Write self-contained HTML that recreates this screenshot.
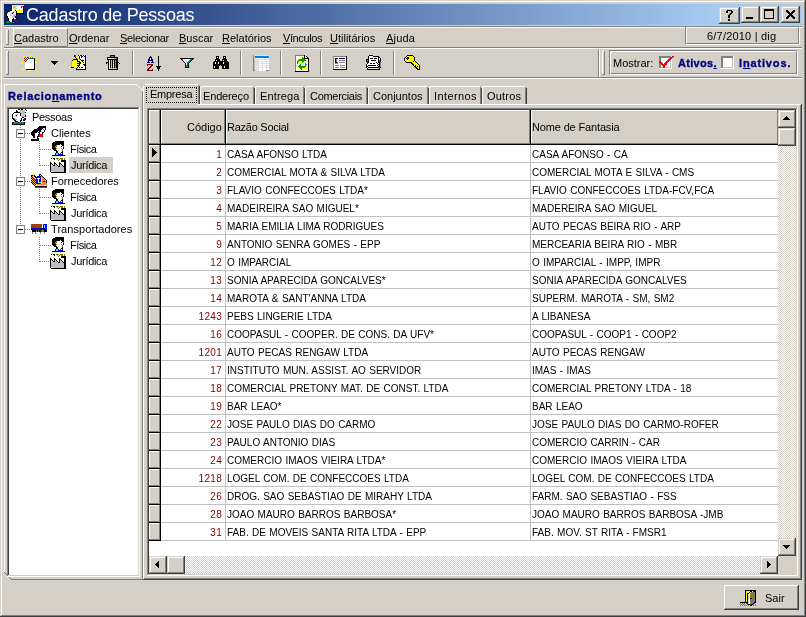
<!DOCTYPE html>
<html><head><meta charset="utf-8"><style>
*{margin:0;padding:0}
html,body{width:806px;height:617px;overflow:hidden;background:#d4d0c8;position:relative;font-family:"Liberation Sans",sans-serif;color:#000}
div{position:absolute}
.t{white-space:nowrap;font-size:11px;will-change:transform}
u{text-decoration:underline}
</style></head><body>
<div style="left:0px;top:0px;width:806px;height:1px;background:#d4d0c8"></div>
<div style="left:0px;top:0px;width:1px;height:617px;background:#d4d0c8"></div>
<div style="left:1px;top:1px;width:804px;height:1px;background:#fff"></div>
<div style="left:1px;top:1px;width:1px;height:615px;background:#fff"></div>
<div style="left:805px;top:0px;width:1px;height:617px;background:#404040"></div>
<div style="left:0px;top:616px;width:806px;height:1px;background:#404040"></div>
<div style="left:804px;top:1px;width:1px;height:615px;background:#808080"></div>
<div style="left:1px;top:615px;width:804px;height:1px;background:#808080"></div>
<div style="left:4px;top:4px;width:798px;height:21px;background:linear-gradient(to right,#0a246a 0px,#a6caf0 712px,#a6caf0 100%)"></div>
<svg style="position:absolute;left:6px;top:5px" width="18" height="18" shape-rendering="crispEdges"><rect x="6" y="0" width="12" height="1" fill="#e0e0e0"/><rect x="6" y="1" width="1" height="1" fill="#fff"/><rect x="7" y="1" width="4" height="1" fill="#c0c0c0"/><rect x="11" y="1" width="4" height="1" fill="#fff"/><rect x="15" y="1" width="2" height="1" fill="#ff0000"/><rect x="17" y="1" width="1" height="1" fill="#000"/><rect x="6" y="2" width="1" height="1" fill="#fff"/><rect x="7" y="2" width="3" height="1" fill="#c0c0c0"/><rect x="10" y="2" width="5" height="1" fill="#fff"/><rect x="15" y="2" width="1" height="1" fill="#ff0000"/><rect x="16" y="2" width="1" height="1" fill="#fff"/><rect x="17" y="2" width="1" height="1" fill="#000"/><rect x="6" y="3" width="1" height="1" fill="#fff"/><rect x="7" y="3" width="2" height="1" fill="#ffff00"/><rect x="9" y="3" width="2" height="1" fill="#c0c0c0"/><rect x="11" y="3" width="4" height="1" fill="#fff"/><rect x="15" y="3" width="1" height="1" fill="#ffff00"/><rect x="16" y="3" width="1" height="1" fill="#fff"/><rect x="17" y="3" width="1" height="1" fill="#000"/><rect x="6" y="4" width="2" height="1" fill="#fff"/><rect x="8" y="4" width="2" height="1" fill="#ffff00"/><rect x="10" y="4" width="2" height="1" fill="#fff"/><rect x="12" y="4" width="2" height="1" fill="#ffff00"/><rect x="14" y="4" width="3" height="1" fill="#fff"/><rect x="17" y="4" width="1" height="1" fill="#000"/><rect x="4" y="5" width="2" height="1" fill="#000"/><rect x="6" y="5" width="3" height="1" fill="#fff"/><rect x="9" y="5" width="1" height="1" fill="#000"/><rect x="10" y="5" width="7" height="1" fill="#ffff00"/><rect x="17" y="5" width="1" height="1" fill="#000"/><rect x="2" y="6" width="2" height="1" fill="#000"/><rect x="4" y="6" width="4" height="1" fill="#fff"/><rect x="8" y="6" width="1" height="1" fill="#c0c0c0"/><rect x="9" y="6" width="1" height="1" fill="#fff"/><rect x="10" y="6" width="1" height="1" fill="#000"/><rect x="11" y="6" width="1" height="1" fill="#ffff00"/><rect x="12" y="6" width="1" height="1" fill="#fff"/><rect x="13" y="6" width="1" height="1" fill="#ffff00"/><rect x="14" y="6" width="1" height="1" fill="#fff"/><rect x="15" y="6" width="1" height="1" fill="#ffff00"/><rect x="16" y="6" width="1" height="1" fill="#fff"/><rect x="17" y="6" width="1" height="1" fill="#000"/><rect x="1" y="7" width="1" height="1" fill="#000"/><rect x="2" y="7" width="3" height="1" fill="#fff"/><rect x="5" y="7" width="2" height="1" fill="#c0c0c0"/><rect x="7" y="7" width="1" height="1" fill="#000"/><rect x="8" y="7" width="2" height="1" fill="#fff"/><rect x="10" y="7" width="1" height="1" fill="#000"/><rect x="11" y="7" width="1" height="1" fill="#fff"/><rect x="12" y="7" width="1" height="1" fill="#ffff00"/><rect x="13" y="7" width="1" height="1" fill="#fff"/><rect x="14" y="7" width="1" height="1" fill="#ffff00"/><rect x="15" y="7" width="2" height="1" fill="#fff"/><rect x="17" y="7" width="1" height="1" fill="#000"/><rect x="0" y="8" width="1" height="1" fill="#000"/><rect x="1" y="8" width="4" height="1" fill="#fff"/><rect x="5" y="8" width="1" height="1" fill="#c0c0c0"/><rect x="6" y="8" width="1" height="1" fill="#000"/><rect x="7" y="8" width="3" height="1" fill="#fff"/><rect x="10" y="8" width="8" height="1" fill="#000"/><rect x="0" y="9" width="1" height="1" fill="#000"/><rect x="1" y="9" width="3" height="1" fill="#fff"/><rect x="4" y="9" width="1" height="1" fill="#c0c0c0"/><rect x="5" y="9" width="2" height="1" fill="#fff"/><rect x="7" y="9" width="3" height="1" fill="#c0c0c0"/><rect x="10" y="9" width="1" height="1" fill="#000"/><rect x="0" y="10" width="1" height="1" fill="#000"/><rect x="1" y="10" width="3" height="1" fill="#fff"/><rect x="4" y="10" width="2" height="1" fill="#c0c0c0"/><rect x="6" y="10" width="1" height="1" fill="#fff"/><rect x="7" y="10" width="3" height="1" fill="#c0c0c0"/><rect x="10" y="10" width="1" height="1" fill="#000"/><rect x="0" y="11" width="2" height="1" fill="#000"/><rect x="2" y="11" width="4" height="1" fill="#fff"/><rect x="6" y="11" width="3" height="1" fill="#c0c0c0"/><rect x="9" y="11" width="1" height="1" fill="#000"/><rect x="1" y="12" width="1" height="1" fill="#000"/><rect x="2" y="12" width="4" height="1" fill="#fff"/><rect x="6" y="12" width="3" height="1" fill="#c0c0c0"/><rect x="9" y="12" width="1" height="1" fill="#000"/><rect x="2" y="13" width="1" height="1" fill="#000"/><rect x="3" y="13" width="4" height="1" fill="#fff"/><rect x="7" y="13" width="1" height="1" fill="#000"/><rect x="8" y="13" width="2" height="1" fill="#fff"/><rect x="10" y="13" width="1" height="1" fill="#000"/><rect x="2" y="14" width="1" height="1" fill="#000"/><rect x="3" y="14" width="3" height="1" fill="#fff"/><rect x="6" y="14" width="2" height="1" fill="#000"/><rect x="8" y="14" width="3" height="1" fill="#800080"/><rect x="11" y="14" width="1" height="1" fill="#000"/><rect x="2" y="15" width="1" height="1" fill="#000"/><rect x="3" y="15" width="3" height="1" fill="#fff"/><rect x="6" y="15" width="1" height="1" fill="#000"/><rect x="7" y="15" width="5" height="1" fill="#800080"/><rect x="1" y="16" width="2" height="1" fill="#00a000"/><rect x="3" y="16" width="1" height="1" fill="#000"/><rect x="4" y="16" width="2" height="1" fill="#fff"/><rect x="6" y="16" width="1" height="1" fill="#000"/><rect x="0" y="17" width="4" height="1" fill="#00a000"/><rect x="5" y="17" width="3" height="1" fill="#008080"/></svg>
<div class="t" style="left:26px;top:5px;font-size:18px;line-height:21px;color:#fff;letter-spacing:-0.2px">Cadastro de Pessoas</div>
<div style="left:719px;top:7px;width:21px;height:17px;background:#404040"></div>
<div style="left:719px;top:7px;width:20px;height:16px;background:#d4d0c8"></div>
<div style="left:720px;top:8px;width:19px;height:15px;background:#808080"></div>
<div style="left:720px;top:8px;width:18px;height:14px;background:#fff"></div>
<div style="left:721px;top:9px;width:17px;height:13px;background:#d4d0c8"></div>
<svg style="position:absolute;left:726px;top:10px" width="7" height="11" shape-rendering="crispEdges"><rect x="1" y="0" width="5" height="1" fill="#000"/><rect x="0" y="1" width="2" height="1" fill="#000"/><rect x="5" y="1" width="2" height="1" fill="#000"/><rect x="0" y="2" width="2" height="1" fill="#000"/><rect x="5" y="2" width="2" height="1" fill="#000"/><rect x="4" y="3" width="2" height="1" fill="#000"/><rect x="3" y="4" width="2" height="1" fill="#000"/><rect x="2" y="5" width="2" height="1" fill="#000"/><rect x="2" y="6" width="2" height="1" fill="#000"/><rect x="2" y="7" width="2" height="1" fill="#000"/><rect x="2" y="9" width="2" height="1" fill="#000"/><rect x="2" y="10" width="2" height="1" fill="#000"/></svg>
<div style="left:741px;top:6px;width:19px;height:17px;background:#404040"></div>
<div style="left:741px;top:6px;width:18px;height:16px;background:#d4d0c8"></div>
<div style="left:742px;top:7px;width:17px;height:15px;background:#808080"></div>
<div style="left:742px;top:7px;width:16px;height:14px;background:#fff"></div>
<div style="left:743px;top:8px;width:15px;height:13px;background:#d4d0c8"></div>
<svg style="position:absolute;left:746px;top:17px" width="7" height="2" shape-rendering="crispEdges"><rect x="0" y="0" width="7" height="1" fill="#000"/><rect x="0" y="1" width="7" height="1" fill="#000"/></svg>
<div style="left:760px;top:6px;width:19px;height:17px;background:#404040"></div>
<div style="left:760px;top:6px;width:18px;height:16px;background:#d4d0c8"></div>
<div style="left:761px;top:7px;width:17px;height:15px;background:#808080"></div>
<div style="left:761px;top:7px;width:16px;height:14px;background:#fff"></div>
<div style="left:762px;top:8px;width:15px;height:13px;background:#d4d0c8"></div>
<svg style="position:absolute;left:764px;top:9px" width="10" height="10" shape-rendering="crispEdges"><rect x="0" y="0" width="10" height="1" fill="#000"/><rect x="0" y="1" width="10" height="1" fill="#000"/><rect x="0" y="2" width="1" height="1" fill="#000"/><rect x="9" y="2" width="1" height="1" fill="#000"/><rect x="0" y="3" width="1" height="1" fill="#000"/><rect x="9" y="3" width="1" height="1" fill="#000"/><rect x="0" y="4" width="1" height="1" fill="#000"/><rect x="9" y="4" width="1" height="1" fill="#000"/><rect x="0" y="5" width="1" height="1" fill="#000"/><rect x="9" y="5" width="1" height="1" fill="#000"/><rect x="0" y="6" width="1" height="1" fill="#000"/><rect x="9" y="6" width="1" height="1" fill="#000"/><rect x="0" y="7" width="1" height="1" fill="#000"/><rect x="9" y="7" width="1" height="1" fill="#000"/><rect x="0" y="8" width="1" height="1" fill="#000"/><rect x="9" y="8" width="1" height="1" fill="#000"/><rect x="0" y="9" width="10" height="1" fill="#000"/></svg>
<div style="left:781px;top:6px;width:19px;height:17px;background:#404040"></div>
<div style="left:781px;top:6px;width:18px;height:16px;background:#d4d0c8"></div>
<div style="left:782px;top:7px;width:17px;height:15px;background:#808080"></div>
<div style="left:782px;top:7px;width:16px;height:14px;background:#fff"></div>
<div style="left:783px;top:8px;width:15px;height:13px;background:#d4d0c8"></div>
<svg style="position:absolute;left:786px;top:10px" width="9" height="9" shape-rendering="crispEdges"><rect x="0" y="0" width="2" height="1" fill="#000"/><rect x="7" y="0" width="2" height="1" fill="#000"/><rect x="0" y="1" width="3" height="1" fill="#000"/><rect x="6" y="1" width="3" height="1" fill="#000"/><rect x="1" y="2" width="3" height="1" fill="#000"/><rect x="5" y="2" width="3" height="1" fill="#000"/><rect x="2" y="3" width="5" height="1" fill="#000"/><rect x="3" y="4" width="3" height="1" fill="#000"/><rect x="2" y="5" width="5" height="1" fill="#000"/><rect x="1" y="6" width="3" height="1" fill="#000"/><rect x="5" y="6" width="3" height="1" fill="#000"/><rect x="0" y="7" width="3" height="1" fill="#000"/><rect x="6" y="7" width="3" height="1" fill="#000"/><rect x="0" y="8" width="2" height="1" fill="#000"/><rect x="7" y="8" width="2" height="1" fill="#000"/></svg>
<div style="left:4px;top:26px;width:798px;height:1px;background:#808080"></div>
<div style="left:4px;top:27px;width:798px;height:1px;background:#fff"></div>
<div style="left:6px;top:30px;width:1px;height:15px;background:#fff"></div>
<div style="left:8px;top:30px;width:1px;height:15px;background:#808080"></div>
<div style="left:6px;top:30px;width:2px;height:1px;background:#fff"></div>
<div style="left:6px;top:44px;width:3px;height:1px;background:#808080"></div>
<div style="left:13px;top:28px;width:55px;height:19px;border-top:1px solid #fff;border-left:1px solid #fff;border-right:1px solid #808080;border-bottom:1px solid #808080;box-sizing:border-box"></div>
<div class="t" style="left:14px;top:31px;font-size:11px;line-height:14px;letter-spacing:0px"><u>C</u>adastro</div>
<div class="t" style="left:69px;top:31px;font-size:11px;line-height:14px;letter-spacing:0px"><u>O</u>rdenar</div>
<div class="t" style="left:120px;top:31px;font-size:11px;line-height:14px;letter-spacing:-0.3px"><u>S</u>elecionar</div>
<div class="t" style="left:179px;top:31px;font-size:11px;line-height:14px;letter-spacing:0px"><u>B</u>uscar</div>
<div class="t" style="left:222px;top:31px;font-size:11px;line-height:14px;letter-spacing:0px"><u>R</u>elatórios</div>
<div class="t" style="left:283px;top:31px;font-size:11px;line-height:14px;letter-spacing:-0.4px"><u>V</u>ínculos</div>
<div class="t" style="left:330px;top:31px;font-size:11px;line-height:14px;letter-spacing:0px"><u>U</u>tilitários</div>
<div class="t" style="left:386px;top:31px;font-size:11px;line-height:14px;letter-spacing:0.2px"><u>A</u>juda</div>
<div style="left:4px;top:47px;width:798px;height:1px;background:#808080"></div>
<div style="left:4px;top:48px;width:798px;height:1px;background:#fff"></div>
<div style="left:685px;top:26px;width:115px;height:19px;border-top:1px solid #808080;border-left:1px solid #808080;border-right:1px solid #fff;border-bottom:1px solid #fff;box-sizing:border-box"></div>
<div style="left:686px;top:27px;width:113px;height:17px;border-top:1px solid #fff;border-left:1px solid #fff;border-right:1px solid #808080;border-bottom:1px solid #808080;box-sizing:border-box"></div>
<div class="t" style="left:707px;top:29px;font-size:11px;line-height:14px;letter-spacing:0.2px">6/7/2010 | dig</div>
<div style="left:6px;top:51px;width:1px;height:24px;background:#fff"></div>
<div style="left:8px;top:51px;width:1px;height:24px;background:#808080"></div>
<div style="left:6px;top:51px;width:2px;height:1px;background:#fff"></div>
<div style="left:6px;top:74px;width:3px;height:1px;background:#808080"></div>
<div style="left:132px;top:51px;width:1px;height:24px;background:#808080"></div>
<div style="left:133px;top:51px;width:1px;height:24px;background:#fff"></div>
<div style="left:240px;top:51px;width:1px;height:24px;background:#808080"></div>
<div style="left:241px;top:51px;width:1px;height:24px;background:#fff"></div>
<div style="left:280px;top:51px;width:1px;height:24px;background:#808080"></div>
<div style="left:281px;top:51px;width:1px;height:24px;background:#fff"></div>
<div style="left:320px;top:51px;width:1px;height:24px;background:#808080"></div>
<div style="left:321px;top:51px;width:1px;height:24px;background:#fff"></div>
<div style="left:393px;top:51px;width:1px;height:24px;background:#808080"></div>
<div style="left:394px;top:51px;width:1px;height:24px;background:#fff"></div>
<div style="left:4px;top:77px;width:798px;height:1px;background:#808080"></div>
<div style="left:4px;top:78px;width:798px;height:1px;background:#fff"></div>
<div style="left:598px;top:49px;width:1px;height:28px;background:#808080"></div>
<div style="left:599px;top:48px;width:1px;height:29px;background:#fff"></div>
<div style="left:602px;top:51px;width:1px;height:24px;background:#fff"></div>
<div style="left:604px;top:51px;width:1px;height:24px;background:#808080"></div>
<div style="left:602px;top:51px;width:2px;height:1px;background:#fff"></div>
<div style="left:602px;top:74px;width:3px;height:1px;background:#808080"></div>
<div style="left:609px;top:50px;width:189px;height:25px;border-top:1px solid #808080;border-left:1px solid #808080;border-right:1px solid #fff;border-bottom:1px solid #fff;box-sizing:border-box"></div>
<div style="left:610px;top:51px;width:187px;height:23px;border-top:1px solid #fff;border-left:1px solid #fff;border-right:1px solid #808080;border-bottom:1px solid #808080;box-sizing:border-box"></div>
<div class="t" style="left:613px;top:56px;font-size:11px;line-height:14px">Mostrar:</div>
<div style="left:659px;top:56px;width:13px;height:13px;background:#fff"></div>
<div style="left:659px;top:56px;width:12px;height:12px;background:#808080"></div>
<div style="left:661px;top:58px;width:10px;height:10px;background:#c0c0c0"></div>
<div style="left:661px;top:58px;width:9px;height:9px;background:#fff"></div>
<svg style="position:absolute;left:659px;top:56px" width="15" height="12" shape-rendering="crispEdges"><rect x="13" y="0" width="2" height="1" fill="#ff0000"/><rect x="11" y="1" width="3" height="1" fill="#ff0000"/><rect x="10" y="2" width="3" height="1" fill="#ff0000"/><rect x="9" y="3" width="3" height="1" fill="#ff0000"/><rect x="8" y="4" width="3" height="1" fill="#ff0000"/><rect x="0" y="5" width="2" height="1" fill="#ff0000"/><rect x="7" y="5" width="3" height="1" fill="#ff0000"/><rect x="0" y="6" width="3" height="1" fill="#ff0000"/><rect x="6" y="6" width="3" height="1" fill="#ff0000"/><rect x="1" y="7" width="3" height="1" fill="#ff0000"/><rect x="5" y="7" width="3" height="1" fill="#ff0000"/><rect x="2" y="8" width="6" height="1" fill="#ff0000"/><rect x="3" y="9" width="4" height="1" fill="#ff0000"/><rect x="4" y="10" width="2" height="1" fill="#ff0000"/><rect x="4" y="11" width="2" height="1" fill="#ff0000"/></svg>
<div class="t" style="left:678px;top:56px;font-size:11px;line-height:14px;font-weight:bold;color:#000080;letter-spacing:0.3px;-webkit-text-stroke:0.35px #000080">Ativos<u>.</u></div>
<div style="left:721px;top:56px;width:13px;height:13px;background:#fff"></div>
<div style="left:721px;top:56px;width:12px;height:12px;background:#808080"></div>
<div style="left:723px;top:58px;width:10px;height:10px;background:#c0c0c0"></div>
<div style="left:723px;top:58px;width:9px;height:9px;background:#fff"></div>
<div class="t" style="left:739px;top:56px;font-size:11px;line-height:14px;font-weight:bold;color:#000080;letter-spacing:0.85px;-webkit-text-stroke:0.35px #000080">I<u>n</u>ativos.</div>
<svg style="position:absolute;left:21px;top:55px" width="17" height="16" shape-rendering="crispEdges"><rect x="1" y="0" width="1" height="1" fill="#ffff00"/><rect x="8" y="0" width="2" height="1" fill="#ffff00"/><rect x="15" y="0" width="1" height="1" fill="#ffff00"/><rect x="2" y="1" width="2" height="1" fill="#ffff00"/><rect x="9" y="1" width="1" height="1" fill="#ffff00"/><rect x="13" y="1" width="2" height="1" fill="#ffff00"/><rect x="4" y="2" width="1" height="1" fill="#800000"/><rect x="5" y="2" width="1" height="1" fill="#fff"/><rect x="6" y="2" width="1" height="1" fill="#800000"/><rect x="7" y="2" width="1" height="1" fill="#008080"/><rect x="8" y="2" width="1" height="1" fill="#fff"/><rect x="9" y="2" width="1" height="1" fill="#008080"/><rect x="10" y="2" width="1" height="1" fill="#fff"/><rect x="11" y="2" width="1" height="1" fill="#008080"/><rect x="12" y="2" width="1" height="1" fill="#fff"/><rect x="3" y="3" width="1" height="1" fill="#800000"/><rect x="4" y="3" width="1" height="1" fill="#fff"/><rect x="5" y="3" width="1" height="1" fill="#800000"/><rect x="6" y="3" width="1" height="1" fill="#fff"/><rect x="7" y="3" width="6" height="1" fill="#008080"/><rect x="13" y="3" width="1" height="1" fill="#000"/><rect x="4" y="4" width="1" height="1" fill="#800000"/><rect x="5" y="4" width="1" height="1" fill="#fff"/><rect x="6" y="4" width="1" height="1" fill="#800000"/><rect x="7" y="4" width="6" height="1" fill="#fff"/><rect x="13" y="4" width="1" height="1" fill="#000"/><rect x="3" y="5" width="1" height="1" fill="#800000"/><rect x="4" y="5" width="1" height="1" fill="#fff"/><rect x="5" y="5" width="1" height="1" fill="#800000"/><rect x="6" y="5" width="7" height="1" fill="#fff"/><rect x="13" y="5" width="1" height="1" fill="#000"/><rect x="4" y="6" width="1" height="1" fill="#800000"/><rect x="5" y="6" width="8" height="1" fill="#fff"/><rect x="13" y="6" width="1" height="1" fill="#000"/><rect x="0" y="7" width="2" height="1" fill="#ffff00"/><rect x="4" y="7" width="9" height="1" fill="#fff"/><rect x="13" y="7" width="1" height="1" fill="#000"/><rect x="14" y="7" width="2" height="1" fill="#ffff00"/><rect x="1" y="8" width="1" height="1" fill="#ffff00"/><rect x="4" y="8" width="9" height="1" fill="#fff"/><rect x="13" y="8" width="1" height="1" fill="#000"/><rect x="14" y="8" width="1" height="1" fill="#ffff00"/><rect x="4" y="9" width="9" height="1" fill="#fff"/><rect x="13" y="9" width="1" height="1" fill="#000"/><rect x="4" y="10" width="9" height="1" fill="#fff"/><rect x="13" y="10" width="1" height="1" fill="#000"/><rect x="4" y="11" width="9" height="1" fill="#fff"/><rect x="13" y="11" width="1" height="1" fill="#000"/><rect x="4" y="12" width="9" height="1" fill="#fff"/><rect x="13" y="12" width="1" height="1" fill="#000"/><rect x="2" y="13" width="1" height="1" fill="#ffff00"/><rect x="4" y="13" width="9" height="1" fill="#fff"/><rect x="13" y="13" width="1" height="1" fill="#000"/><rect x="14" y="13" width="1" height="1" fill="#ffff00"/><rect x="1" y="14" width="2" height="1" fill="#ffff00"/><rect x="5" y="14" width="9" height="1" fill="#000"/><rect x="14" y="14" width="2" height="1" fill="#ffff00"/><rect x="1" y="15" width="1" height="1" fill="#ffff00"/><rect x="8" y="15" width="2" height="1" fill="#ffff00"/><rect x="15" y="15" width="1" height="1" fill="#ffff00"/></svg>
<svg style="position:absolute;left:50px;top:60px" width="9" height="6" viewBox="0 0 9 6" shape-rendering="crispEdges"><path d="M1 1h7v1h-1v1h-1v1h-1v1h-1v-1h-1v-1h-1v-1h-1z" fill="#000"/></svg>
<svg style="position:absolute;left:70px;top:54px" width="17" height="16" shape-rendering="crispEdges"><rect x="4" y="1" width="1" height="1" fill="#000"/><rect x="5" y="1" width="1" height="1" fill="#ff0000"/><rect x="8" y="1" width="1" height="1" fill="#800000"/><rect x="9" y="1" width="1" height="1" fill="#fff"/><rect x="10" y="1" width="1" height="1" fill="#800000"/><rect x="11" y="1" width="1" height="1" fill="#000080"/><rect x="12" y="1" width="1" height="1" fill="#fff"/><rect x="13" y="1" width="1" height="1" fill="#000080"/><rect x="14" y="1" width="1" height="1" fill="#fff"/><rect x="15" y="1" width="1" height="1" fill="#000080"/><rect x="4" y="2" width="1" height="1" fill="#000"/><rect x="5" y="2" width="1" height="1" fill="#ff0000"/><rect x="6" y="2" width="1" height="1" fill="#ffff00"/><rect x="8" y="2" width="1" height="1" fill="#fff"/><rect x="9" y="2" width="1" height="1" fill="#800000"/><rect x="10" y="2" width="1" height="1" fill="#fff"/><rect x="11" y="2" width="1" height="1" fill="#800000"/><rect x="12" y="2" width="1" height="1" fill="#000080"/><rect x="13" y="2" width="1" height="1" fill="#fff"/><rect x="14" y="2" width="2" height="1" fill="#000080"/><rect x="5" y="3" width="1" height="1" fill="#000"/><rect x="6" y="3" width="2" height="1" fill="#ffff00"/><rect x="9" y="3" width="1" height="1" fill="#800000"/><rect x="10" y="3" width="1" height="1" fill="#fff"/><rect x="11" y="3" width="1" height="1" fill="#800000"/><rect x="12" y="3" width="3" height="1" fill="#fff"/><rect x="15" y="3" width="1" height="1" fill="#000"/><rect x="6" y="4" width="1" height="1" fill="#000"/><rect x="7" y="4" width="2" height="1" fill="#ffff00"/><rect x="9" y="4" width="1" height="1" fill="#000"/><rect x="10" y="4" width="5" height="1" fill="#fff"/><rect x="15" y="4" width="1" height="1" fill="#000"/><rect x="3" y="5" width="5" height="1" fill="#000"/><rect x="8" y="5" width="2" height="1" fill="#ffff00"/><rect x="10" y="5" width="1" height="1" fill="#000"/><rect x="11" y="5" width="4" height="1" fill="#fff"/><rect x="15" y="5" width="1" height="1" fill="#000"/><rect x="2" y="6" width="1" height="1" fill="#000"/><rect x="3" y="6" width="4" height="1" fill="#ffff00"/><rect x="7" y="6" width="1" height="1" fill="#000"/><rect x="8" y="6" width="1" height="1" fill="#fff"/><rect x="9" y="6" width="2" height="1" fill="#ffff00"/><rect x="11" y="6" width="3" height="1" fill="#000"/><rect x="14" y="6" width="1" height="1" fill="#fff"/><rect x="15" y="6" width="1" height="1" fill="#000"/><rect x="1" y="7" width="1" height="1" fill="#00ffff"/><rect x="2" y="7" width="2" height="1" fill="#ffff00"/><rect x="4" y="7" width="1" height="1" fill="#fff"/><rect x="5" y="7" width="2" height="1" fill="#ffff00"/><rect x="7" y="7" width="3" height="1" fill="#000"/><rect x="10" y="7" width="2" height="1" fill="#ffff00"/><rect x="12" y="7" width="1" height="1" fill="#000"/><rect x="13" y="7" width="2" height="1" fill="#fff"/><rect x="15" y="7" width="1" height="1" fill="#000"/><rect x="1" y="8" width="1" height="1" fill="#00ffff"/><rect x="2" y="8" width="7" height="1" fill="#ffff00"/><rect x="9" y="8" width="2" height="1" fill="#000"/><rect x="11" y="8" width="2" height="1" fill="#ffff00"/><rect x="13" y="8" width="1" height="1" fill="#000"/><rect x="14" y="8" width="1" height="1" fill="#fff"/><rect x="15" y="8" width="1" height="1" fill="#000"/><rect x="1" y="9" width="1" height="1" fill="#00ffff"/><rect x="2" y="9" width="1" height="1" fill="#ffff00"/><rect x="3" y="9" width="1" height="1" fill="#fff"/><rect x="4" y="9" width="3" height="1" fill="#ffff00"/><rect x="7" y="9" width="4" height="1" fill="#000"/><rect x="11" y="9" width="1" height="1" fill="#fff"/><rect x="12" y="9" width="2" height="1" fill="#ffff00"/><rect x="14" y="9" width="1" height="1" fill="#fff"/><rect x="15" y="9" width="1" height="1" fill="#000"/><rect x="1" y="10" width="1" height="1" fill="#00ffff"/><rect x="2" y="10" width="7" height="1" fill="#ffff00"/><rect x="9" y="10" width="1" height="1" fill="#000"/><rect x="10" y="10" width="3" height="1" fill="#fff"/><rect x="13" y="10" width="3" height="1" fill="#000"/><rect x="1" y="11" width="1" height="1" fill="#00ffff"/><rect x="2" y="11" width="1" height="1" fill="#ffff00"/><rect x="3" y="11" width="1" height="1" fill="#fff"/><rect x="4" y="11" width="3" height="1" fill="#ffff00"/><rect x="7" y="11" width="3" height="1" fill="#000"/><rect x="10" y="11" width="4" height="1" fill="#fff"/><rect x="14" y="11" width="2" height="1" fill="#000"/><rect x="1" y="12" width="1" height="1" fill="#00ffff"/><rect x="2" y="12" width="6" height="1" fill="#ffff00"/><rect x="8" y="12" width="1" height="1" fill="#000"/><rect x="9" y="12" width="6" height="1" fill="#fff"/><rect x="15" y="12" width="1" height="1" fill="#000"/><rect x="1" y="13" width="3" height="1" fill="#000"/><rect x="4" y="13" width="3" height="1" fill="#ffff00"/><rect x="7" y="13" width="1" height="1" fill="#000"/><rect x="8" y="13" width="1" height="1" fill="#fff"/><rect x="9" y="13" width="1" height="1" fill="#000"/><rect x="10" y="13" width="1" height="1" fill="#fff"/><rect x="11" y="13" width="2" height="1" fill="#000"/><rect x="13" y="13" width="2" height="1" fill="#fff"/><rect x="15" y="13" width="1" height="1" fill="#000"/><rect x="6" y="14" width="1" height="1" fill="#000"/><rect x="7" y="14" width="8" height="1" fill="#fff"/><rect x="15" y="14" width="1" height="1" fill="#000"/><rect x="6" y="15" width="10" height="1" fill="#000"/></svg>
<svg style="position:absolute;left:104px;top:54px" width="16" height="17" shape-rendering="crispEdges"><rect x="6" y="1" width="5" height="1" fill="#000"/><rect x="6" y="2" width="1" height="1" fill="#000"/><rect x="7" y="2" width="3" height="1" fill="#808080"/><rect x="10" y="2" width="1" height="1" fill="#000"/><rect x="3" y="3" width="11" height="1" fill="#000"/><rect x="3" y="4" width="1" height="1" fill="#000"/><rect x="4" y="4" width="3" height="1" fill="#fff"/><rect x="7" y="4" width="3" height="1" fill="#e0e0e0"/><rect x="10" y="4" width="2" height="1" fill="#c0c0c0"/><rect x="12" y="4" width="1" height="1" fill="#808080"/><rect x="13" y="4" width="1" height="1" fill="#000"/><rect x="3" y="5" width="11" height="1" fill="#000"/><rect x="4" y="6" width="1" height="1" fill="#000"/><rect x="5" y="6" width="1" height="1" fill="#fff"/><rect x="6" y="6" width="1" height="1" fill="#000"/><rect x="7" y="6" width="1" height="1" fill="#c0c0c0"/><rect x="8" y="6" width="1" height="1" fill="#000"/><rect x="9" y="6" width="1" height="1" fill="#c0c0c0"/><rect x="10" y="6" width="1" height="1" fill="#000"/><rect x="11" y="6" width="1" height="1" fill="#808080"/><rect x="12" y="6" width="2" height="1" fill="#000"/><rect x="4" y="7" width="1" height="1" fill="#000"/><rect x="5" y="7" width="1" height="1" fill="#fff"/><rect x="6" y="7" width="1" height="1" fill="#000"/><rect x="7" y="7" width="1" height="1" fill="#c0c0c0"/><rect x="8" y="7" width="1" height="1" fill="#000"/><rect x="9" y="7" width="1" height="1" fill="#c0c0c0"/><rect x="10" y="7" width="1" height="1" fill="#000"/><rect x="11" y="7" width="1" height="1" fill="#808080"/><rect x="12" y="7" width="2" height="1" fill="#000"/><rect x="2" y="8" width="3" height="1" fill="#000"/><rect x="5" y="8" width="1" height="1" fill="#fff"/><rect x="6" y="8" width="1" height="1" fill="#000"/><rect x="7" y="8" width="1" height="1" fill="#c0c0c0"/><rect x="8" y="8" width="1" height="1" fill="#000"/><rect x="9" y="8" width="1" height="1" fill="#fff"/><rect x="10" y="8" width="1" height="1" fill="#000"/><rect x="11" y="8" width="1" height="1" fill="#808080"/><rect x="12" y="8" width="3" height="1" fill="#000"/><rect x="2" y="9" width="1" height="1" fill="#000"/><rect x="4" y="9" width="1" height="1" fill="#000"/><rect x="5" y="9" width="1" height="1" fill="#fff"/><rect x="6" y="9" width="1" height="1" fill="#000"/><rect x="7" y="9" width="1" height="1" fill="#c0c0c0"/><rect x="8" y="9" width="1" height="1" fill="#000"/><rect x="9" y="9" width="1" height="1" fill="#c0c0c0"/><rect x="10" y="9" width="1" height="1" fill="#000"/><rect x="11" y="9" width="1" height="1" fill="#808080"/><rect x="12" y="9" width="2" height="1" fill="#000"/><rect x="15" y="9" width="1" height="1" fill="#000"/><rect x="4" y="10" width="1" height="1" fill="#000"/><rect x="5" y="10" width="1" height="1" fill="#fff"/><rect x="6" y="10" width="1" height="1" fill="#000"/><rect x="7" y="10" width="1" height="1" fill="#c0c0c0"/><rect x="8" y="10" width="1" height="1" fill="#000"/><rect x="9" y="10" width="1" height="1" fill="#fff"/><rect x="10" y="10" width="1" height="1" fill="#000"/><rect x="11" y="10" width="1" height="1" fill="#808080"/><rect x="12" y="10" width="2" height="1" fill="#000"/><rect x="4" y="11" width="1" height="1" fill="#000"/><rect x="5" y="11" width="1" height="1" fill="#fff"/><rect x="6" y="11" width="1" height="1" fill="#000"/><rect x="7" y="11" width="1" height="1" fill="#c0c0c0"/><rect x="8" y="11" width="1" height="1" fill="#000"/><rect x="9" y="11" width="1" height="1" fill="#c0c0c0"/><rect x="10" y="11" width="1" height="1" fill="#000"/><rect x="11" y="11" width="1" height="1" fill="#808080"/><rect x="12" y="11" width="2" height="1" fill="#000"/><rect x="4" y="12" width="1" height="1" fill="#000"/><rect x="5" y="12" width="1" height="1" fill="#fff"/><rect x="6" y="12" width="1" height="1" fill="#000"/><rect x="7" y="12" width="1" height="1" fill="#c0c0c0"/><rect x="8" y="12" width="1" height="1" fill="#000"/><rect x="9" y="12" width="1" height="1" fill="#fff"/><rect x="10" y="12" width="1" height="1" fill="#000"/><rect x="11" y="12" width="1" height="1" fill="#808080"/><rect x="12" y="12" width="2" height="1" fill="#000"/><rect x="4" y="13" width="1" height="1" fill="#000"/><rect x="5" y="13" width="1" height="1" fill="#fff"/><rect x="6" y="13" width="1" height="1" fill="#000"/><rect x="7" y="13" width="1" height="1" fill="#c0c0c0"/><rect x="8" y="13" width="1" height="1" fill="#000"/><rect x="9" y="13" width="1" height="1" fill="#c0c0c0"/><rect x="10" y="13" width="1" height="1" fill="#000"/><rect x="11" y="13" width="1" height="1" fill="#808080"/><rect x="12" y="13" width="2" height="1" fill="#000"/><rect x="4" y="14" width="1" height="1" fill="#000"/><rect x="5" y="14" width="1" height="1" fill="#fff"/><rect x="6" y="14" width="6" height="1" fill="#c0c0c0"/><rect x="12" y="14" width="1" height="1" fill="#808080"/><rect x="13" y="14" width="1" height="1" fill="#000"/><rect x="4" y="15" width="10" height="1" fill="#000"/></svg>
<svg style="position:absolute;left:146px;top:55px" width="16" height="16" shape-rendering="crispEdges"><rect x="4" y="1" width="1" height="1" fill="#000080"/><rect x="12" y="1" width="1" height="1" fill="#000"/><rect x="3" y="2" width="3" height="1" fill="#000080"/><rect x="12" y="2" width="1" height="1" fill="#000"/><rect x="3" y="3" width="1" height="1" fill="#000080"/><rect x="4" y="3" width="1" height="1" fill="#fff"/><rect x="5" y="3" width="1" height="1" fill="#000080"/><rect x="12" y="3" width="1" height="1" fill="#000"/><rect x="2" y="4" width="2" height="1" fill="#000080"/><rect x="5" y="4" width="2" height="1" fill="#000080"/><rect x="12" y="4" width="1" height="1" fill="#000"/><rect x="2" y="5" width="5" height="1" fill="#000080"/><rect x="12" y="5" width="1" height="1" fill="#000"/><rect x="2" y="6" width="1" height="1" fill="#000080"/><rect x="6" y="6" width="1" height="1" fill="#000080"/><rect x="12" y="6" width="1" height="1" fill="#000"/><rect x="1" y="7" width="3" height="1" fill="#000080"/><rect x="5" y="7" width="3" height="1" fill="#000080"/><rect x="12" y="7" width="1" height="1" fill="#000"/><rect x="12" y="8" width="1" height="1" fill="#000"/><rect x="1" y="9" width="6" height="1" fill="#800000"/><rect x="12" y="9" width="1" height="1" fill="#000"/><rect x="1" y="10" width="1" height="1" fill="#800000"/><rect x="5" y="10" width="2" height="1" fill="#800000"/><rect x="12" y="10" width="1" height="1" fill="#000"/><rect x="4" y="11" width="2" height="1" fill="#800000"/><rect x="10" y="11" width="5" height="1" fill="#000"/><rect x="3" y="12" width="2" height="1" fill="#800000"/><rect x="11" y="12" width="3" height="1" fill="#000"/><rect x="2" y="13" width="2" height="1" fill="#800000"/><rect x="11" y="13" width="3" height="1" fill="#000"/><rect x="1" y="14" width="2" height="1" fill="#800000"/><rect x="6" y="14" width="1" height="1" fill="#800000"/><rect x="12" y="14" width="1" height="1" fill="#000"/><rect x="1" y="15" width="6" height="1" fill="#800000"/><rect x="12" y="15" width="1" height="1" fill="#000"/></svg>
<svg style="position:absolute;left:179px;top:57px" width="16" height="11" shape-rendering="crispEdges"><rect x="1" y="1" width="14" height="1" fill="#000"/><rect x="2" y="2" width="1" height="1" fill="#000"/><rect x="3" y="2" width="1" height="1" fill="#008080"/><rect x="4" y="2" width="7" height="1" fill="#fff"/><rect x="11" y="2" width="2" height="1" fill="#008080"/><rect x="13" y="2" width="1" height="1" fill="#000"/><rect x="3" y="3" width="1" height="1" fill="#000"/><rect x="4" y="3" width="3" height="1" fill="#fff"/><rect x="7" y="3" width="1" height="1" fill="#c0c0c0"/><rect x="8" y="3" width="2" height="1" fill="#fff"/><rect x="10" y="3" width="2" height="1" fill="#008080"/><rect x="12" y="3" width="1" height="1" fill="#000"/><rect x="4" y="4" width="1" height="1" fill="#000"/><rect x="5" y="4" width="2" height="1" fill="#fff"/><rect x="7" y="4" width="1" height="1" fill="#c0c0c0"/><rect x="8" y="4" width="1" height="1" fill="#fff"/><rect x="9" y="4" width="2" height="1" fill="#008080"/><rect x="11" y="4" width="1" height="1" fill="#000"/><rect x="5" y="5" width="1" height="1" fill="#000"/><rect x="6" y="5" width="1" height="1" fill="#fff"/><rect x="7" y="5" width="1" height="1" fill="#c0c0c0"/><rect x="8" y="5" width="2" height="1" fill="#008080"/><rect x="10" y="5" width="1" height="1" fill="#000"/><rect x="6" y="6" width="1" height="1" fill="#000"/><rect x="7" y="6" width="1" height="1" fill="#fff"/><rect x="8" y="6" width="1" height="1" fill="#008080"/><rect x="9" y="6" width="1" height="1" fill="#000"/><rect x="6" y="7" width="1" height="1" fill="#000"/><rect x="7" y="7" width="1" height="1" fill="#fff"/><rect x="8" y="7" width="1" height="1" fill="#008080"/><rect x="9" y="7" width="1" height="1" fill="#000"/><rect x="6" y="8" width="1" height="1" fill="#000"/><rect x="7" y="8" width="2" height="1" fill="#008080"/><rect x="9" y="8" width="1" height="1" fill="#000"/><rect x="6" y="9" width="1" height="1" fill="#000"/><rect x="7" y="9" width="2" height="1" fill="#008080"/><rect x="9" y="9" width="1" height="1" fill="#000"/><rect x="6" y="10" width="4" height="1" fill="#000"/></svg>
<svg style="position:absolute;left:212px;top:55px" width="17" height="14" shape-rendering="crispEdges"><rect x="4" y="1" width="3" height="1" fill="#000"/><rect x="11" y="1" width="3" height="1" fill="#000"/><rect x="4" y="2" width="1" height="1" fill="#000"/><rect x="5" y="2" width="1" height="1" fill="#fff"/><rect x="6" y="2" width="1" height="1" fill="#000"/><rect x="11" y="2" width="1" height="1" fill="#000"/><rect x="12" y="2" width="1" height="1" fill="#fff"/><rect x="13" y="2" width="1" height="1" fill="#000"/><rect x="4" y="3" width="3" height="1" fill="#000"/><rect x="11" y="3" width="3" height="1" fill="#000"/><rect x="3" y="4" width="5" height="1" fill="#000"/><rect x="10" y="4" width="5" height="1" fill="#000"/><rect x="3" y="5" width="1" height="1" fill="#000"/><rect x="4" y="5" width="1" height="1" fill="#fff"/><rect x="5" y="5" width="3" height="1" fill="#000"/><rect x="10" y="5" width="1" height="1" fill="#000"/><rect x="11" y="5" width="1" height="1" fill="#fff"/><rect x="12" y="5" width="3" height="1" fill="#000"/><rect x="2" y="6" width="14" height="1" fill="#000"/><rect x="1" y="7" width="2" height="1" fill="#000"/><rect x="3" y="7" width="1" height="1" fill="#fff"/><rect x="4" y="7" width="2" height="1" fill="#000"/><rect x="6" y="7" width="1" height="1" fill="#fff"/><rect x="7" y="7" width="4" height="1" fill="#000"/><rect x="11" y="7" width="1" height="1" fill="#fff"/><rect x="12" y="7" width="5" height="1" fill="#000"/><rect x="1" y="8" width="2" height="1" fill="#000"/><rect x="3" y="8" width="1" height="1" fill="#fff"/><rect x="4" y="8" width="2" height="1" fill="#000"/><rect x="6" y="8" width="1" height="1" fill="#fff"/><rect x="7" y="8" width="4" height="1" fill="#000"/><rect x="11" y="8" width="1" height="1" fill="#fff"/><rect x="12" y="8" width="5" height="1" fill="#000"/><rect x="1" y="9" width="16" height="1" fill="#000"/><rect x="1" y="10" width="7" height="1" fill="#000"/><rect x="9" y="10" width="8" height="1" fill="#000"/><rect x="1" y="11" width="1" height="1" fill="#000"/><rect x="2" y="11" width="1" height="1" fill="#fff"/><rect x="3" y="11" width="4" height="1" fill="#000"/><rect x="10" y="11" width="2" height="1" fill="#000"/><rect x="12" y="11" width="1" height="1" fill="#fff"/><rect x="13" y="11" width="4" height="1" fill="#000"/><rect x="1" y="12" width="1" height="1" fill="#000"/><rect x="2" y="12" width="1" height="1" fill="#fff"/><rect x="3" y="12" width="4" height="1" fill="#000"/><rect x="10" y="12" width="2" height="1" fill="#000"/><rect x="12" y="12" width="1" height="1" fill="#fff"/><rect x="13" y="12" width="4" height="1" fill="#000"/><rect x="1" y="13" width="6" height="1" fill="#000"/><rect x="10" y="13" width="7" height="1" fill="#000"/></svg>
<svg style="position:absolute;left:252px;top:54px" width="18" height="18" shape-rendering="crispEdges"><rect x="1" y="1" width="1" height="1" fill="#808080"/><rect x="2" y="1" width="15" height="1" fill="#e0e0e0"/><rect x="1" y="2" width="1" height="1" fill="#808080"/><rect x="2" y="2" width="1" height="1" fill="#c0c0c0"/><rect x="3" y="2" width="14" height="1" fill="#0080ff"/><rect x="1" y="3" width="1" height="1" fill="#808080"/><rect x="2" y="3" width="1" height="1" fill="#c0c0c0"/><rect x="3" y="3" width="14" height="1" fill="#0080ff"/><rect x="1" y="4" width="1" height="1" fill="#808080"/><rect x="2" y="4" width="1" height="1" fill="#c0c0c0"/><rect x="3" y="4" width="14" height="1" fill="#fff"/><rect x="1" y="5" width="1" height="1" fill="#808080"/><rect x="2" y="5" width="1" height="1" fill="#c0c0c0"/><rect x="3" y="5" width="14" height="1" fill="#e0e0e0"/><rect x="1" y="6" width="1" height="1" fill="#808080"/><rect x="2" y="6" width="1" height="1" fill="#c0c0c0"/><rect x="3" y="6" width="4" height="1" fill="#e0e0e0"/><rect x="7" y="6" width="3" height="1" fill="#fff"/><rect x="10" y="6" width="1" height="1" fill="#e0e0e0"/><rect x="11" y="6" width="3" height="1" fill="#fff"/><rect x="14" y="6" width="1" height="1" fill="#e0e0e0"/><rect x="15" y="6" width="2" height="1" fill="#fff"/><rect x="1" y="7" width="1" height="1" fill="#808080"/><rect x="2" y="7" width="1" height="1" fill="#c0c0c0"/><rect x="3" y="7" width="14" height="1" fill="#e0e0e0"/><rect x="1" y="8" width="1" height="1" fill="#808080"/><rect x="2" y="8" width="1" height="1" fill="#c0c0c0"/><rect x="3" y="8" width="4" height="1" fill="#e0e0e0"/><rect x="7" y="8" width="3" height="1" fill="#fff"/><rect x="10" y="8" width="1" height="1" fill="#e0e0e0"/><rect x="11" y="8" width="3" height="1" fill="#fff"/><rect x="14" y="8" width="1" height="1" fill="#e0e0e0"/><rect x="15" y="8" width="2" height="1" fill="#fff"/><rect x="1" y="9" width="1" height="1" fill="#808080"/><rect x="2" y="9" width="1" height="1" fill="#c0c0c0"/><rect x="3" y="9" width="14" height="1" fill="#e0e0e0"/><rect x="1" y="10" width="1" height="1" fill="#808080"/><rect x="2" y="10" width="1" height="1" fill="#c0c0c0"/><rect x="3" y="10" width="4" height="1" fill="#e0e0e0"/><rect x="7" y="10" width="3" height="1" fill="#fff"/><rect x="10" y="10" width="1" height="1" fill="#e0e0e0"/><rect x="11" y="10" width="3" height="1" fill="#fff"/><rect x="14" y="10" width="1" height="1" fill="#e0e0e0"/><rect x="15" y="10" width="2" height="1" fill="#fff"/><rect x="1" y="11" width="1" height="1" fill="#808080"/><rect x="2" y="11" width="1" height="1" fill="#c0c0c0"/><rect x="3" y="11" width="14" height="1" fill="#e0e0e0"/><rect x="1" y="12" width="1" height="1" fill="#808080"/><rect x="2" y="12" width="1" height="1" fill="#c0c0c0"/><rect x="3" y="12" width="4" height="1" fill="#e0e0e0"/><rect x="7" y="12" width="3" height="1" fill="#fff"/><rect x="10" y="12" width="1" height="1" fill="#e0e0e0"/><rect x="11" y="12" width="3" height="1" fill="#fff"/><rect x="14" y="12" width="1" height="1" fill="#e0e0e0"/><rect x="15" y="12" width="2" height="1" fill="#fff"/><rect x="1" y="13" width="1" height="1" fill="#808080"/><rect x="2" y="13" width="1" height="1" fill="#c0c0c0"/><rect x="3" y="13" width="14" height="1" fill="#e0e0e0"/><rect x="1" y="14" width="1" height="1" fill="#808080"/><rect x="2" y="14" width="1" height="1" fill="#c0c0c0"/><rect x="3" y="14" width="4" height="1" fill="#e0e0e0"/><rect x="7" y="14" width="3" height="1" fill="#fff"/><rect x="10" y="14" width="1" height="1" fill="#e0e0e0"/><rect x="11" y="14" width="3" height="1" fill="#fff"/><rect x="14" y="14" width="1" height="1" fill="#e0e0e0"/><rect x="15" y="14" width="2" height="1" fill="#fff"/><rect x="1" y="15" width="1" height="1" fill="#808080"/><rect x="2" y="15" width="1" height="1" fill="#c0c0c0"/><rect x="3" y="15" width="4" height="1" fill="#e0e0e0"/><rect x="7" y="15" width="3" height="1" fill="#fff"/><rect x="10" y="15" width="1" height="1" fill="#e0e0e0"/><rect x="11" y="15" width="3" height="1" fill="#fff"/><rect x="14" y="15" width="1" height="1" fill="#e0e0e0"/><rect x="15" y="15" width="2" height="1" fill="#fff"/><rect x="1" y="16" width="2" height="1" fill="#808080"/><rect x="3" y="16" width="4" height="1" fill="#e0e0e0"/><rect x="7" y="16" width="3" height="1" fill="#fff"/><rect x="10" y="16" width="1" height="1" fill="#e0e0e0"/><rect x="11" y="16" width="3" height="1" fill="#fff"/><rect x="14" y="16" width="3" height="1" fill="#808080"/></svg>
<svg style="position:absolute;left:295px;top:55px" width="14" height="17" shape-rendering="crispEdges"><rect x="0" y="0" width="9" height="1" fill="#808080"/><rect x="9" y="0" width="1" height="1" fill="#000"/><rect x="0" y="1" width="1" height="1" fill="#808080"/><rect x="1" y="1" width="8" height="1" fill="#fff"/><rect x="9" y="1" width="1" height="1" fill="#000"/><rect x="10" y="1" width="1" height="1" fill="#fff"/><rect x="11" y="1" width="1" height="1" fill="#000"/><rect x="0" y="2" width="1" height="1" fill="#808080"/><rect x="1" y="2" width="5" height="1" fill="#fff"/><rect x="6" y="2" width="1" height="1" fill="#ffff00"/><rect x="7" y="2" width="1" height="1" fill="#00a000"/><rect x="8" y="2" width="1" height="1" fill="#ffff00"/><rect x="9" y="2" width="1" height="1" fill="#000"/><rect x="10" y="2" width="2" height="1" fill="#fff"/><rect x="12" y="2" width="1" height="1" fill="#000"/><rect x="0" y="3" width="1" height="1" fill="#808080"/><rect x="1" y="3" width="4" height="1" fill="#fff"/><rect x="5" y="3" width="1" height="1" fill="#ffff00"/><rect x="6" y="3" width="1" height="1" fill="#fff"/><rect x="7" y="3" width="2" height="1" fill="#00a000"/><rect x="9" y="3" width="5" height="1" fill="#000"/><rect x="0" y="4" width="1" height="1" fill="#808080"/><rect x="1" y="4" width="2" height="1" fill="#fff"/><rect x="3" y="4" width="1" height="1" fill="#ffff00"/><rect x="4" y="4" width="6" height="1" fill="#00a000"/><rect x="11" y="4" width="1" height="1" fill="#ffff00"/><rect x="12" y="4" width="1" height="1" fill="#fff"/><rect x="13" y="4" width="1" height="1" fill="#000"/><rect x="0" y="5" width="1" height="1" fill="#808080"/><rect x="1" y="5" width="1" height="1" fill="#fff"/><rect x="2" y="5" width="1" height="1" fill="#ffff00"/><rect x="3" y="5" width="8" height="1" fill="#00a000"/><rect x="11" y="5" width="1" height="1" fill="#ffff00"/><rect x="12" y="5" width="1" height="1" fill="#fff"/><rect x="13" y="5" width="1" height="1" fill="#000"/><rect x="0" y="6" width="1" height="1" fill="#808080"/><rect x="1" y="6" width="1" height="1" fill="#fff"/><rect x="2" y="6" width="2" height="1" fill="#0080ff"/><rect x="4" y="6" width="1" height="1" fill="#ffff00"/><rect x="5" y="6" width="2" height="1" fill="#fff"/><rect x="7" y="6" width="2" height="1" fill="#00a000"/><rect x="9" y="6" width="1" height="1" fill="#ffff00"/><rect x="10" y="6" width="1" height="1" fill="#fff"/><rect x="11" y="6" width="1" height="1" fill="#ffff00"/><rect x="12" y="6" width="1" height="1" fill="#fff"/><rect x="13" y="6" width="1" height="1" fill="#000"/><rect x="0" y="7" width="1" height="1" fill="#808080"/><rect x="1" y="7" width="1" height="1" fill="#fff"/><rect x="2" y="7" width="1" height="1" fill="#0080ff"/><rect x="3" y="7" width="1" height="1" fill="#ffff00"/><rect x="4" y="7" width="1" height="1" fill="#fff"/><rect x="5" y="7" width="1" height="1" fill="#ffff00"/><rect x="6" y="7" width="1" height="1" fill="#fff"/><rect x="7" y="7" width="1" height="1" fill="#00a000"/><rect x="8" y="7" width="1" height="1" fill="#ffff00"/><rect x="9" y="7" width="1" height="1" fill="#fff"/><rect x="10" y="7" width="1" height="1" fill="#ffff00"/><rect x="11" y="7" width="2" height="1" fill="#fff"/><rect x="13" y="7" width="1" height="1" fill="#000"/><rect x="0" y="8" width="1" height="1" fill="#808080"/><rect x="1" y="8" width="1" height="1" fill="#fff"/><rect x="2" y="8" width="1" height="1" fill="#0080ff"/><rect x="3" y="8" width="1" height="1" fill="#fff"/><rect x="4" y="8" width="1" height="1" fill="#ffff00"/><rect x="5" y="8" width="1" height="1" fill="#fff"/><rect x="6" y="8" width="1" height="1" fill="#ffff00"/><rect x="7" y="8" width="1" height="1" fill="#fff"/><rect x="8" y="8" width="1" height="1" fill="#ffff00"/><rect x="9" y="8" width="1" height="1" fill="#fff"/><rect x="10" y="8" width="1" height="1" fill="#0080ff"/><rect x="11" y="8" width="2" height="1" fill="#fff"/><rect x="13" y="8" width="1" height="1" fill="#000"/><rect x="0" y="9" width="1" height="1" fill="#808080"/><rect x="1" y="9" width="1" height="1" fill="#fff"/><rect x="2" y="9" width="1" height="1" fill="#ffff00"/><rect x="3" y="9" width="1" height="1" fill="#fff"/><rect x="4" y="9" width="1" height="1" fill="#ffff00"/><rect x="5" y="9" width="1" height="1" fill="#00a000"/><rect x="6" y="9" width="1" height="1" fill="#ffff00"/><rect x="7" y="9" width="1" height="1" fill="#fff"/><rect x="8" y="9" width="1" height="1" fill="#ffff00"/><rect x="9" y="9" width="1" height="1" fill="#fff"/><rect x="10" y="9" width="2" height="1" fill="#0080ff"/><rect x="12" y="9" width="1" height="1" fill="#fff"/><rect x="13" y="9" width="1" height="1" fill="#000"/><rect x="0" y="10" width="1" height="1" fill="#808080"/><rect x="1" y="10" width="1" height="1" fill="#ffff00"/><rect x="2" y="10" width="1" height="1" fill="#fff"/><rect x="3" y="10" width="1" height="1" fill="#ffff00"/><rect x="4" y="10" width="2" height="1" fill="#00a000"/><rect x="6" y="10" width="1" height="1" fill="#ffff00"/><rect x="7" y="10" width="2" height="1" fill="#fff"/><rect x="9" y="10" width="1" height="1" fill="#ffff00"/><rect x="10" y="10" width="1" height="1" fill="#0080ff"/><rect x="11" y="10" width="1" height="1" fill="#ffff00"/><rect x="12" y="10" width="1" height="1" fill="#fff"/><rect x="13" y="10" width="1" height="1" fill="#000"/><rect x="0" y="11" width="1" height="1" fill="#808080"/><rect x="1" y="11" width="1" height="1" fill="#fff"/><rect x="2" y="11" width="1" height="1" fill="#ffff00"/><rect x="3" y="11" width="8" height="1" fill="#00a000"/><rect x="11" y="11" width="1" height="1" fill="#ffff00"/><rect x="12" y="11" width="1" height="1" fill="#fff"/><rect x="13" y="11" width="1" height="1" fill="#000"/><rect x="0" y="12" width="1" height="1" fill="#808080"/><rect x="1" y="12" width="1" height="1" fill="#fff"/><rect x="2" y="12" width="1" height="1" fill="#ffff00"/><rect x="3" y="12" width="1" height="1" fill="#fff"/><rect x="4" y="12" width="6" height="1" fill="#00a000"/><rect x="10" y="12" width="1" height="1" fill="#ffff00"/><rect x="11" y="12" width="2" height="1" fill="#fff"/><rect x="13" y="12" width="1" height="1" fill="#000"/><rect x="0" y="13" width="1" height="1" fill="#808080"/><rect x="1" y="13" width="2" height="1" fill="#fff"/><rect x="3" y="13" width="1" height="1" fill="#ffff00"/><rect x="4" y="13" width="1" height="1" fill="#fff"/><rect x="5" y="13" width="2" height="1" fill="#00a000"/><rect x="7" y="13" width="1" height="1" fill="#ffff00"/><rect x="8" y="13" width="1" height="1" fill="#fff"/><rect x="9" y="13" width="1" height="1" fill="#ffff00"/><rect x="10" y="13" width="1" height="1" fill="#fff"/><rect x="11" y="13" width="1" height="1" fill="#ffff00"/><rect x="12" y="13" width="1" height="1" fill="#fff"/><rect x="13" y="13" width="1" height="1" fill="#000"/><rect x="0" y="14" width="1" height="1" fill="#808080"/><rect x="1" y="14" width="4" height="1" fill="#fff"/><rect x="5" y="14" width="1" height="1" fill="#ffff00"/><rect x="6" y="14" width="1" height="1" fill="#00a000"/><rect x="7" y="14" width="6" height="1" fill="#fff"/><rect x="13" y="14" width="1" height="1" fill="#000"/><rect x="0" y="15" width="1" height="1" fill="#808080"/><rect x="1" y="15" width="12" height="1" fill="#fff"/><rect x="13" y="15" width="1" height="1" fill="#000"/><rect x="0" y="16" width="14" height="1" fill="#000"/></svg>
<svg style="position:absolute;left:332px;top:55px" width="16" height="15" shape-rendering="crispEdges"><rect x="1" y="1" width="13" height="1" fill="#808080"/><rect x="14" y="1" width="1" height="1" fill="#000"/><rect x="1" y="2" width="1" height="1" fill="#808080"/><rect x="2" y="2" width="12" height="1" fill="#fff"/><rect x="14" y="2" width="1" height="1" fill="#000"/><rect x="1" y="3" width="1" height="1" fill="#808080"/><rect x="2" y="3" width="1" height="1" fill="#fff"/><rect x="3" y="3" width="3" height="1" fill="#000"/><rect x="6" y="3" width="1" height="1" fill="#fff"/><rect x="7" y="3" width="6" height="1" fill="#000080"/><rect x="13" y="3" width="1" height="1" fill="#fff"/><rect x="14" y="3" width="1" height="1" fill="#000"/><rect x="1" y="4" width="1" height="1" fill="#808080"/><rect x="2" y="4" width="1" height="1" fill="#fff"/><rect x="3" y="4" width="1" height="1" fill="#000"/><rect x="4" y="4" width="1" height="1" fill="#808080"/><rect x="5" y="4" width="9" height="1" fill="#fff"/><rect x="14" y="4" width="1" height="1" fill="#000"/><rect x="1" y="5" width="1" height="1" fill="#808080"/><rect x="2" y="5" width="1" height="1" fill="#fff"/><rect x="3" y="5" width="1" height="1" fill="#000"/><rect x="4" y="5" width="1" height="1" fill="#808080"/><rect x="5" y="5" width="2" height="1" fill="#fff"/><rect x="7" y="5" width="6" height="1" fill="#808080"/><rect x="13" y="5" width="1" height="1" fill="#fff"/><rect x="14" y="5" width="1" height="1" fill="#000"/><rect x="1" y="6" width="1" height="1" fill="#808080"/><rect x="2" y="6" width="1" height="1" fill="#fff"/><rect x="3" y="6" width="1" height="1" fill="#000"/><rect x="4" y="6" width="1" height="1" fill="#808080"/><rect x="5" y="6" width="9" height="1" fill="#fff"/><rect x="14" y="6" width="1" height="1" fill="#000"/><rect x="1" y="7" width="1" height="1" fill="#808080"/><rect x="2" y="7" width="1" height="1" fill="#fff"/><rect x="3" y="7" width="2" height="1" fill="#000"/><rect x="5" y="7" width="1" height="1" fill="#808080"/><rect x="6" y="7" width="1" height="1" fill="#fff"/><rect x="7" y="7" width="6" height="1" fill="#808080"/><rect x="13" y="7" width="1" height="1" fill="#fff"/><rect x="14" y="7" width="1" height="1" fill="#000"/><rect x="1" y="8" width="1" height="1" fill="#808080"/><rect x="2" y="8" width="1" height="1" fill="#fff"/><rect x="3" y="8" width="3" height="1" fill="#808080"/><rect x="6" y="8" width="8" height="1" fill="#fff"/><rect x="14" y="8" width="1" height="1" fill="#000"/><rect x="1" y="9" width="1" height="1" fill="#808080"/><rect x="2" y="9" width="12" height="1" fill="#fff"/><rect x="14" y="9" width="1" height="1" fill="#000"/><rect x="1" y="10" width="1" height="1" fill="#808080"/><rect x="2" y="10" width="1" height="1" fill="#fff"/><rect x="3" y="10" width="4" height="1" fill="#808080"/><rect x="7" y="10" width="1" height="1" fill="#fff"/><rect x="8" y="10" width="5" height="1" fill="#808080"/><rect x="13" y="10" width="1" height="1" fill="#fff"/><rect x="14" y="10" width="1" height="1" fill="#000"/><rect x="1" y="11" width="1" height="1" fill="#808080"/><rect x="2" y="11" width="12" height="1" fill="#fff"/><rect x="14" y="11" width="1" height="1" fill="#000"/><rect x="1" y="12" width="1" height="1" fill="#808080"/><rect x="2" y="12" width="1" height="1" fill="#fff"/><rect x="3" y="12" width="4" height="1" fill="#808080"/><rect x="7" y="12" width="1" height="1" fill="#fff"/><rect x="8" y="12" width="5" height="1" fill="#808080"/><rect x="13" y="12" width="1" height="1" fill="#fff"/><rect x="14" y="12" width="1" height="1" fill="#000"/><rect x="1" y="13" width="1" height="1" fill="#808080"/><rect x="2" y="13" width="12" height="1" fill="#fff"/><rect x="14" y="13" width="1" height="1" fill="#000"/><rect x="1" y="14" width="14" height="1" fill="#000"/></svg>
<svg style="position:absolute;left:365px;top:54px" width="17" height="16" shape-rendering="crispEdges"><rect x="4" y="1" width="4" height="1" fill="#000"/><rect x="3" y="2" width="1" height="1" fill="#000"/><rect x="4" y="2" width="4" height="1" fill="#fff"/><rect x="8" y="2" width="6" height="1" fill="#000"/><rect x="3" y="3" width="1" height="1" fill="#000"/><rect x="4" y="3" width="9" height="1" fill="#fff"/><rect x="13" y="3" width="2" height="1" fill="#000"/><rect x="3" y="4" width="1" height="1" fill="#000"/><rect x="4" y="4" width="1" height="1" fill="#fff"/><rect x="5" y="4" width="3" height="1" fill="#000"/><rect x="8" y="4" width="1" height="1" fill="#fff"/><rect x="9" y="4" width="3" height="1" fill="#000"/><rect x="12" y="4" width="1" height="1" fill="#fff"/><rect x="13" y="4" width="1" height="1" fill="#000"/><rect x="14" y="4" width="1" height="1" fill="#fff"/><rect x="15" y="4" width="1" height="1" fill="#000"/><rect x="1" y="5" width="3" height="1" fill="#000"/><rect x="4" y="5" width="9" height="1" fill="#fff"/><rect x="13" y="5" width="1" height="1" fill="#000"/><rect x="14" y="5" width="1" height="1" fill="#fff"/><rect x="15" y="5" width="1" height="1" fill="#000"/><rect x="1" y="6" width="1" height="1" fill="#000"/><rect x="2" y="6" width="1" height="1" fill="#ff0000"/><rect x="3" y="6" width="1" height="1" fill="#000"/><rect x="4" y="6" width="2" height="1" fill="#fff"/><rect x="6" y="6" width="5" height="1" fill="#000"/><rect x="11" y="6" width="2" height="1" fill="#fff"/><rect x="13" y="6" width="1" height="1" fill="#000"/><rect x="14" y="6" width="1" height="1" fill="#ff0000"/><rect x="15" y="6" width="1" height="1" fill="#000"/><rect x="1" y="7" width="1" height="1" fill="#000"/><rect x="2" y="7" width="1" height="1" fill="#ff0000"/><rect x="3" y="7" width="1" height="1" fill="#000"/><rect x="4" y="7" width="9" height="1" fill="#fff"/><rect x="13" y="7" width="1" height="1" fill="#000"/><rect x="14" y="7" width="1" height="1" fill="#ff0000"/><rect x="15" y="7" width="1" height="1" fill="#000"/><rect x="2" y="8" width="2" height="1" fill="#000"/><rect x="4" y="8" width="7" height="1" fill="#fff"/><rect x="11" y="8" width="1" height="1" fill="#000"/><rect x="12" y="8" width="1" height="1" fill="#fff"/><rect x="13" y="8" width="2" height="1" fill="#000"/><rect x="15" y="8" width="1" height="1" fill="#808080"/><rect x="2" y="9" width="1" height="1" fill="#000"/><rect x="3" y="9" width="2" height="1" fill="#fff"/><rect x="5" y="9" width="2" height="1" fill="#000"/><rect x="7" y="9" width="1" height="1" fill="#fff"/><rect x="8" y="9" width="2" height="1" fill="#000"/><rect x="10" y="9" width="2" height="1" fill="#fff"/><rect x="12" y="9" width="1" height="1" fill="#000"/><rect x="13" y="9" width="1" height="1" fill="#fff"/><rect x="14" y="9" width="1" height="1" fill="#000"/><rect x="15" y="9" width="1" height="1" fill="#808080"/><rect x="1" y="10" width="1" height="1" fill="#000"/><rect x="2" y="10" width="11" height="1" fill="#fff"/><rect x="13" y="10" width="2" height="1" fill="#000"/><rect x="15" y="10" width="1" height="1" fill="#808080"/><rect x="1" y="11" width="1" height="1" fill="#000"/><rect x="2" y="11" width="1" height="1" fill="#fff"/><rect x="3" y="11" width="8" height="1" fill="#000"/><rect x="11" y="11" width="1" height="1" fill="#fff"/><rect x="12" y="11" width="1" height="1" fill="#000"/><rect x="13" y="11" width="1" height="1" fill="#fff"/><rect x="14" y="11" width="1" height="1" fill="#000"/><rect x="15" y="11" width="1" height="1" fill="#808080"/><rect x="1" y="12" width="2" height="1" fill="#000"/><rect x="3" y="12" width="10" height="1" fill="#fff"/><rect x="13" y="12" width="2" height="1" fill="#000"/><rect x="15" y="12" width="1" height="1" fill="#808080"/><rect x="1" y="13" width="1" height="1" fill="#000"/><rect x="2" y="13" width="1" height="1" fill="#e0e0e0"/><rect x="3" y="13" width="11" height="1" fill="#000"/><rect x="14" y="13" width="1" height="1" fill="#808080"/><rect x="15" y="13" width="1" height="1" fill="#000"/><rect x="2" y="14" width="1" height="1" fill="#000"/><rect x="3" y="14" width="11" height="1" fill="#e0e0e0"/><rect x="14" y="14" width="1" height="1" fill="#000"/><rect x="2" y="15" width="13" height="1" fill="#000"/></svg>
<svg style="position:absolute;left:403px;top:54px" width="18" height="16" shape-rendering="crispEdges"><rect x="4" y="1" width="6" height="1" fill="#000"/><rect x="3" y="2" width="1" height="1" fill="#000"/><rect x="4" y="2" width="6" height="1" fill="#ffff00"/><rect x="10" y="2" width="1" height="1" fill="#000"/><rect x="2" y="3" width="1" height="1" fill="#000"/><rect x="3" y="3" width="1" height="1" fill="#ffff00"/><rect x="4" y="3" width="2" height="1" fill="#000"/><rect x="6" y="3" width="5" height="1" fill="#ffff00"/><rect x="11" y="3" width="1" height="1" fill="#000"/><rect x="1" y="4" width="1" height="1" fill="#000"/><rect x="2" y="4" width="1" height="1" fill="#ffff00"/><rect x="3" y="4" width="3" height="1" fill="#000"/><rect x="6" y="4" width="5" height="1" fill="#ffff00"/><rect x="11" y="4" width="1" height="1" fill="#000"/><rect x="1" y="5" width="1" height="1" fill="#000"/><rect x="2" y="5" width="2" height="1" fill="#ffff00"/><rect x="4" y="5" width="1" height="1" fill="#000"/><rect x="5" y="5" width="6" height="1" fill="#ffff00"/><rect x="11" y="5" width="1" height="1" fill="#000"/><rect x="1" y="6" width="1" height="1" fill="#000"/><rect x="2" y="6" width="9" height="1" fill="#ffff00"/><rect x="11" y="6" width="1" height="1" fill="#000"/><rect x="2" y="7" width="1" height="1" fill="#000"/><rect x="3" y="7" width="7" height="1" fill="#ffff00"/><rect x="10" y="7" width="1" height="1" fill="#000"/><rect x="11" y="7" width="1" height="1" fill="#ffff00"/><rect x="12" y="7" width="1" height="1" fill="#000"/><rect x="3" y="8" width="6" height="1" fill="#000"/><rect x="9" y="8" width="4" height="1" fill="#ffff00"/><rect x="13" y="8" width="1" height="1" fill="#000"/><rect x="8" y="9" width="2" height="1" fill="#000"/><rect x="10" y="9" width="4" height="1" fill="#ffff00"/><rect x="14" y="9" width="1" height="1" fill="#000"/><rect x="9" y="10" width="2" height="1" fill="#000"/><rect x="11" y="10" width="4" height="1" fill="#ffff00"/><rect x="15" y="10" width="1" height="1" fill="#000"/><rect x="10" y="11" width="1" height="1" fill="#000"/><rect x="11" y="11" width="1" height="1" fill="#ffff00"/><rect x="12" y="11" width="1" height="1" fill="#000"/><rect x="13" y="11" width="3" height="1" fill="#ffff00"/><rect x="16" y="11" width="1" height="1" fill="#000"/><rect x="11" y="12" width="2" height="1" fill="#000"/><rect x="13" y="12" width="1" height="1" fill="#ffff00"/><rect x="14" y="12" width="1" height="1" fill="#000"/><rect x="15" y="12" width="1" height="1" fill="#ffff00"/><rect x="16" y="12" width="1" height="1" fill="#000"/><rect x="12" y="13" width="2" height="1" fill="#000"/><rect x="14" y="13" width="2" height="1" fill="#ffff00"/><rect x="16" y="13" width="1" height="1" fill="#000"/><rect x="13" y="14" width="2" height="1" fill="#000"/><rect x="15" y="14" width="1" height="1" fill="#ffff00"/><rect x="16" y="14" width="1" height="1" fill="#000"/><rect x="14" y="15" width="3" height="1" fill="#000"/></svg>
<div style="left:4px;top:84px;width:133px;height:1px;background:#fff"></div>
<div style="left:4px;top:84px;width:1px;height:488px;background:#fff"></div>
<div style="left:137px;top:85px;width:1px;height:1px;background:#fff"></div>
<div style="left:138px;top:86px;width:1px;height:1px;background:#fff"></div>
<div style="left:139px;top:87px;width:1px;height:1px;background:#fff"></div>
<div style="left:140px;top:88px;width:1px;height:1px;background:#fff"></div>
<div style="left:141px;top:89px;width:1px;height:1px;background:#fff"></div>
<div style="left:142px;top:90px;width:1px;height:1px;background:#fff"></div>
<div style="left:142px;top:91px;width:1px;height:488px;background:#808080"></div>
<div style="left:12px;top:579px;width:131px;height:1px;background:#808080"></div>
<div style="left:4px;top:572px;width:1px;height:1px;background:#808080"></div>
<div style="left:5px;top:573px;width:1px;height:1px;background:#808080"></div>
<div style="left:6px;top:574px;width:1px;height:1px;background:#808080"></div>
<div style="left:7px;top:575px;width:1px;height:1px;background:#808080"></div>
<div style="left:8px;top:576px;width:1px;height:1px;background:#808080"></div>
<div style="left:9px;top:577px;width:1px;height:1px;background:#808080"></div>
<div style="left:10px;top:578px;width:1px;height:1px;background:#808080"></div>
<div style="left:11px;top:579px;width:1px;height:1px;background:#808080"></div>
<div class="t" style="left:8px;top:89px;font-size:11px;line-height:14px;font-weight:bold;color:#000080;letter-spacing:0.68px;-webkit-text-stroke:0.35px #000080">Relacio<u>n</u>amento</div>
<div style="left:7px;top:107px;width:133px;height:470px;background:#fff"></div>
<div style="left:7px;top:107px;width:132px;height:469px;background:#808080"></div>
<div style="left:8px;top:108px;width:131px;height:468px;background:#d4d0c8"></div>
<div style="left:8px;top:108px;width:130px;height:467px;background:#404040"></div>
<div style="left:9px;top:109px;width:129px;height:466px;background:#fff"></div>
<div style="left:143px;top:104px;width:659px;height:1px;background:#fff"></div>
<div style="left:143px;top:90px;width:1px;height:490px;background:#fff"></div>
<div style="left:800px;top:105px;width:1px;height:474px;background:#808080"></div>
<div style="left:801px;top:104px;width:1px;height:476px;background:#404040"></div>
<div style="left:144px;top:578px;width:657px;height:1px;background:#808080"></div>
<div style="left:143px;top:579px;width:659px;height:1px;background:#404040"></div>
<div style="left:145px;top:84px;width:53px;height:1px;background:#fff"></div>
<div style="left:144px;top:85px;width:1px;height:1px;background:#fff"></div>
<div style="left:143px;top:86px;width:1px;height:19px;background:#fff"></div>
<div style="left:144px;top:86px;width:54px;height:19px;background:#d4d0c8"></div>
<div style="left:144px;top:85px;width:54px;height:1px;background:#d4d0c8"></div>
<div style="left:198px;top:85px;width:1px;height:1px;background:#808080"></div>
<div style="left:198px;top:86px;width:1px;height:18px;background:#808080"></div>
<div style="left:199px;top:86px;width:1px;height:18px;background:#404040"></div>
<div style="left:146px;top:87px;width:51px;height:16px;border:1px dotted #000;box-sizing:border-box"></div>
<div class="t" style="left:150px;top:87px;font-size:11px;line-height:14px;letter-spacing:-0.25px">Empresa</div>
<div style="left:201px;top:86px;width:52px;height:1px;background:#fff"></div>
<div style="left:200px;top:87px;width:1px;height:1px;background:#fff"></div>
<div style="left:200px;top:88px;width:1px;height:16px;background:#fff"></div>
<div style="left:253px;top:87px;width:1px;height:1px;background:#808080"></div>
<div style="left:253px;top:88px;width:1px;height:16px;background:#808080"></div>
<div style="left:254px;top:88px;width:1px;height:16px;background:#404040"></div>
<div class="t" style="left:203px;top:89px;font-size:11px;line-height:14px;letter-spacing:-0.15px">Endereço</div>
<div style="left:256px;top:86px;width:47px;height:1px;background:#fff"></div>
<div style="left:255px;top:87px;width:1px;height:1px;background:#fff"></div>
<div style="left:255px;top:88px;width:1px;height:16px;background:#fff"></div>
<div style="left:303px;top:87px;width:1px;height:1px;background:#808080"></div>
<div style="left:303px;top:88px;width:1px;height:16px;background:#808080"></div>
<div style="left:304px;top:88px;width:1px;height:16px;background:#404040"></div>
<div class="t" style="left:260px;top:89px;font-size:11px;line-height:14px;letter-spacing:0.15px">Entrega</div>
<div style="left:306px;top:86px;width:60px;height:1px;background:#fff"></div>
<div style="left:305px;top:87px;width:1px;height:1px;background:#fff"></div>
<div style="left:305px;top:88px;width:1px;height:16px;background:#fff"></div>
<div style="left:366px;top:87px;width:1px;height:1px;background:#808080"></div>
<div style="left:366px;top:88px;width:1px;height:16px;background:#808080"></div>
<div style="left:367px;top:88px;width:1px;height:16px;background:#404040"></div>
<div class="t" style="left:310px;top:89px;font-size:11px;line-height:14px;letter-spacing:-0.3px">Comerciais</div>
<div style="left:369px;top:86px;width:58px;height:1px;background:#fff"></div>
<div style="left:368px;top:87px;width:1px;height:1px;background:#fff"></div>
<div style="left:368px;top:88px;width:1px;height:16px;background:#fff"></div>
<div style="left:427px;top:87px;width:1px;height:1px;background:#808080"></div>
<div style="left:427px;top:88px;width:1px;height:16px;background:#808080"></div>
<div style="left:428px;top:88px;width:1px;height:16px;background:#404040"></div>
<div class="t" style="left:373px;top:89px;font-size:11px;line-height:14px;letter-spacing:0px">Conjuntos</div>
<div style="left:430px;top:86px;width:50px;height:1px;background:#fff"></div>
<div style="left:429px;top:87px;width:1px;height:1px;background:#fff"></div>
<div style="left:429px;top:88px;width:1px;height:16px;background:#fff"></div>
<div style="left:480px;top:87px;width:1px;height:1px;background:#808080"></div>
<div style="left:480px;top:88px;width:1px;height:16px;background:#808080"></div>
<div style="left:481px;top:88px;width:1px;height:16px;background:#404040"></div>
<div class="t" style="left:434px;top:89px;font-size:11px;line-height:14px;letter-spacing:0.4px">Internos</div>
<div style="left:483px;top:86px;width:42px;height:1px;background:#fff"></div>
<div style="left:482px;top:87px;width:1px;height:1px;background:#fff"></div>
<div style="left:482px;top:88px;width:1px;height:16px;background:#fff"></div>
<div style="left:525px;top:87px;width:1px;height:1px;background:#808080"></div>
<div style="left:525px;top:88px;width:1px;height:16px;background:#808080"></div>
<div style="left:526px;top:88px;width:1px;height:16px;background:#404040"></div>
<div class="t" style="left:487px;top:89px;font-size:11px;line-height:14px;letter-spacing:0.2px">Outros</div>
<div style="left:147px;top:108px;width:651px;height:468px;background:#fff"></div>
<div style="left:147px;top:108px;width:650px;height:467px;background:#808080"></div>
<div style="left:148px;top:109px;width:649px;height:466px;background:#d4d0c8"></div>
<div style="left:148px;top:109px;width:648px;height:465px;background:#404040"></div>
<div style="left:149px;top:110px;width:647px;height:464px;background:#fff"></div>
<div style="left:149px;top:110px;width:11px;height:34px;background:#d4d0c8"></div>
<div style="left:149px;top:110px;width:11px;height:1px;background:#fff"></div>
<div style="left:149px;top:110px;width:1px;height:33px;background:#fff"></div>
<div style="left:159px;top:110px;width:1px;height:34px;background:#808080"></div>
<div style="left:149px;top:143px;width:11px;height:1px;background:#808080"></div>
<div style="left:160px;top:110px;width:1px;height:35px;background:#000"></div>
<div style="left:161px;top:110px;width:64px;height:34px;background:#d4d0c8"></div>
<div style="left:161px;top:110px;width:64px;height:1px;background:#fff"></div>
<div style="left:161px;top:110px;width:1px;height:33px;background:#fff"></div>
<div style="left:224px;top:110px;width:1px;height:34px;background:#808080"></div>
<div style="left:161px;top:143px;width:64px;height:1px;background:#808080"></div>
<div style="left:225px;top:110px;width:1px;height:35px;background:#000"></div>
<div style="left:226px;top:110px;width:304px;height:34px;background:#d4d0c8"></div>
<div style="left:226px;top:110px;width:304px;height:1px;background:#fff"></div>
<div style="left:226px;top:110px;width:1px;height:33px;background:#fff"></div>
<div style="left:529px;top:110px;width:1px;height:34px;background:#808080"></div>
<div style="left:226px;top:143px;width:304px;height:1px;background:#808080"></div>
<div style="left:530px;top:110px;width:1px;height:35px;background:#000"></div>
<div style="left:531px;top:110px;width:247px;height:34px;background:#d4d0c8"></div>
<div style="left:531px;top:110px;width:247px;height:1px;background:#fff"></div>
<div style="left:531px;top:110px;width:1px;height:33px;background:#fff"></div>
<div style="left:777px;top:110px;width:1px;height:34px;background:#808080"></div>
<div style="left:531px;top:143px;width:247px;height:1px;background:#808080"></div>
<div style="left:149px;top:144px;width:629px;height:1px;background:#000"></div>
<div class="t" style="left:187px;top:120px;font-size:11px;line-height:14px">Código</div>
<div class="t" style="left:227px;top:120px;font-size:11px;line-height:14px;letter-spacing:-0.25px">Razão Social</div>
<div class="t" style="left:532px;top:120px;font-size:11px;line-height:14px;letter-spacing:-0.15px">Nome de Fantasia</div>
<div style="left:149px;top:145px;width:11px;height:17px;background:#d4d0c8"></div>
<div style="left:149px;top:145px;width:11px;height:1px;background:#fff"></div>
<div style="left:149px;top:145px;width:1px;height:17px;background:#fff"></div>
<div style="left:159px;top:145px;width:1px;height:17px;background:#808080"></div>
<div style="left:149px;top:161px;width:11px;height:1px;background:#808080"></div>
<div style="left:160px;top:145px;width:1px;height:18px;background:#000"></div>
<div style="left:149px;top:162px;width:12px;height:1px;background:#000"></div>
<div style="left:161px;top:162px;width:617px;height:1px;background:#c0c0c0"></div>
<div style="left:225px;top:145px;width:1px;height:18px;background:#c0c0c0"></div>
<div style="left:530px;top:145px;width:1px;height:18px;background:#c0c0c0"></div>
<div class="t" style="left:162px;top:148px;width:60px;text-align:right;color:#800000;font-size:10px;line-height:14px;letter-spacing:0.3px">1</div>
<div class="t" style="left:227px;top:148px;font-size:10px;line-height:14px;word-spacing:0.6px">CASA AFONSO LTDA</div>
<div class="t" style="left:532px;top:148px;font-size:10px;line-height:14px;word-spacing:0.6px">CASA AFONSO - CA</div>
<div style="left:149px;top:163px;width:11px;height:17px;background:#d4d0c8"></div>
<div style="left:149px;top:163px;width:11px;height:1px;background:#fff"></div>
<div style="left:149px;top:163px;width:1px;height:17px;background:#fff"></div>
<div style="left:159px;top:163px;width:1px;height:17px;background:#808080"></div>
<div style="left:149px;top:179px;width:11px;height:1px;background:#808080"></div>
<div style="left:160px;top:163px;width:1px;height:18px;background:#000"></div>
<div style="left:149px;top:180px;width:12px;height:1px;background:#000"></div>
<div style="left:161px;top:180px;width:617px;height:1px;background:#c0c0c0"></div>
<div style="left:225px;top:163px;width:1px;height:18px;background:#c0c0c0"></div>
<div style="left:530px;top:163px;width:1px;height:18px;background:#c0c0c0"></div>
<div class="t" style="left:162px;top:166px;width:60px;text-align:right;color:#800000;font-size:10px;line-height:14px;letter-spacing:0.3px">2</div>
<div class="t" style="left:227px;top:166px;font-size:10px;line-height:14px;word-spacing:0.6px">COMERCIAL MOTA &amp; SILVA LTDA</div>
<div class="t" style="left:532px;top:166px;font-size:10px;line-height:14px;word-spacing:0.6px">COMERCIAL MOTA E SILVA - CMS</div>
<div style="left:149px;top:181px;width:11px;height:17px;background:#d4d0c8"></div>
<div style="left:149px;top:181px;width:11px;height:1px;background:#fff"></div>
<div style="left:149px;top:181px;width:1px;height:17px;background:#fff"></div>
<div style="left:159px;top:181px;width:1px;height:17px;background:#808080"></div>
<div style="left:149px;top:197px;width:11px;height:1px;background:#808080"></div>
<div style="left:160px;top:181px;width:1px;height:18px;background:#000"></div>
<div style="left:149px;top:198px;width:12px;height:1px;background:#000"></div>
<div style="left:161px;top:198px;width:617px;height:1px;background:#c0c0c0"></div>
<div style="left:225px;top:181px;width:1px;height:18px;background:#c0c0c0"></div>
<div style="left:530px;top:181px;width:1px;height:18px;background:#c0c0c0"></div>
<div class="t" style="left:162px;top:184px;width:60px;text-align:right;color:#800000;font-size:10px;line-height:14px;letter-spacing:0.3px">3</div>
<div class="t" style="left:227px;top:184px;font-size:10px;line-height:14px;word-spacing:0.6px">FLAVIO CONFECCOES LTDA*</div>
<div class="t" style="left:532px;top:184px;font-size:10px;line-height:14px;word-spacing:0.6px">FLAVIO CONFECCOES LTDA-FCV,FCA</div>
<div style="left:149px;top:199px;width:11px;height:17px;background:#d4d0c8"></div>
<div style="left:149px;top:199px;width:11px;height:1px;background:#fff"></div>
<div style="left:149px;top:199px;width:1px;height:17px;background:#fff"></div>
<div style="left:159px;top:199px;width:1px;height:17px;background:#808080"></div>
<div style="left:149px;top:215px;width:11px;height:1px;background:#808080"></div>
<div style="left:160px;top:199px;width:1px;height:18px;background:#000"></div>
<div style="left:149px;top:216px;width:12px;height:1px;background:#000"></div>
<div style="left:161px;top:216px;width:617px;height:1px;background:#c0c0c0"></div>
<div style="left:225px;top:199px;width:1px;height:18px;background:#c0c0c0"></div>
<div style="left:530px;top:199px;width:1px;height:18px;background:#c0c0c0"></div>
<div class="t" style="left:162px;top:202px;width:60px;text-align:right;color:#800000;font-size:10px;line-height:14px;letter-spacing:0.3px">4</div>
<div class="t" style="left:227px;top:202px;font-size:10px;line-height:14px;word-spacing:0.6px">MADEIREIRA SAO MIGUEL*</div>
<div class="t" style="left:532px;top:202px;font-size:10px;line-height:14px;word-spacing:0.6px">MADEREIRA SAO MIGUEL</div>
<div style="left:149px;top:217px;width:11px;height:17px;background:#d4d0c8"></div>
<div style="left:149px;top:217px;width:11px;height:1px;background:#fff"></div>
<div style="left:149px;top:217px;width:1px;height:17px;background:#fff"></div>
<div style="left:159px;top:217px;width:1px;height:17px;background:#808080"></div>
<div style="left:149px;top:233px;width:11px;height:1px;background:#808080"></div>
<div style="left:160px;top:217px;width:1px;height:18px;background:#000"></div>
<div style="left:149px;top:234px;width:12px;height:1px;background:#000"></div>
<div style="left:161px;top:234px;width:617px;height:1px;background:#c0c0c0"></div>
<div style="left:225px;top:217px;width:1px;height:18px;background:#c0c0c0"></div>
<div style="left:530px;top:217px;width:1px;height:18px;background:#c0c0c0"></div>
<div class="t" style="left:162px;top:220px;width:60px;text-align:right;color:#800000;font-size:10px;line-height:14px;letter-spacing:0.3px">5</div>
<div class="t" style="left:227px;top:220px;font-size:10px;line-height:14px;word-spacing:0.6px">MARIA EMILIA LIMA RODRIGUES</div>
<div class="t" style="left:532px;top:220px;font-size:10px;line-height:14px;word-spacing:0.6px">AUTO PECAS BEIRA RIO - ARP</div>
<div style="left:149px;top:235px;width:11px;height:17px;background:#d4d0c8"></div>
<div style="left:149px;top:235px;width:11px;height:1px;background:#fff"></div>
<div style="left:149px;top:235px;width:1px;height:17px;background:#fff"></div>
<div style="left:159px;top:235px;width:1px;height:17px;background:#808080"></div>
<div style="left:149px;top:251px;width:11px;height:1px;background:#808080"></div>
<div style="left:160px;top:235px;width:1px;height:18px;background:#000"></div>
<div style="left:149px;top:252px;width:12px;height:1px;background:#000"></div>
<div style="left:161px;top:252px;width:617px;height:1px;background:#c0c0c0"></div>
<div style="left:225px;top:235px;width:1px;height:18px;background:#c0c0c0"></div>
<div style="left:530px;top:235px;width:1px;height:18px;background:#c0c0c0"></div>
<div class="t" style="left:162px;top:238px;width:60px;text-align:right;color:#800000;font-size:10px;line-height:14px;letter-spacing:0.3px">9</div>
<div class="t" style="left:227px;top:238px;font-size:10px;line-height:14px;word-spacing:0.6px">ANTONIO SENRA GOMES - EPP</div>
<div class="t" style="left:532px;top:238px;font-size:10px;line-height:14px;word-spacing:0.6px">MERCEARIA BEIRA RIO - MBR</div>
<div style="left:149px;top:253px;width:11px;height:17px;background:#d4d0c8"></div>
<div style="left:149px;top:253px;width:11px;height:1px;background:#fff"></div>
<div style="left:149px;top:253px;width:1px;height:17px;background:#fff"></div>
<div style="left:159px;top:253px;width:1px;height:17px;background:#808080"></div>
<div style="left:149px;top:269px;width:11px;height:1px;background:#808080"></div>
<div style="left:160px;top:253px;width:1px;height:18px;background:#000"></div>
<div style="left:149px;top:270px;width:12px;height:1px;background:#000"></div>
<div style="left:161px;top:270px;width:617px;height:1px;background:#c0c0c0"></div>
<div style="left:225px;top:253px;width:1px;height:18px;background:#c0c0c0"></div>
<div style="left:530px;top:253px;width:1px;height:18px;background:#c0c0c0"></div>
<div class="t" style="left:162px;top:256px;width:60px;text-align:right;color:#800000;font-size:10px;line-height:14px;letter-spacing:0.3px">12</div>
<div class="t" style="left:227px;top:256px;font-size:10px;line-height:14px;word-spacing:0.6px">O IMPARCIAL</div>
<div class="t" style="left:532px;top:256px;font-size:10px;line-height:14px;word-spacing:0.6px">O IMPARCIAL - IMPP, IMPR</div>
<div style="left:149px;top:271px;width:11px;height:17px;background:#d4d0c8"></div>
<div style="left:149px;top:271px;width:11px;height:1px;background:#fff"></div>
<div style="left:149px;top:271px;width:1px;height:17px;background:#fff"></div>
<div style="left:159px;top:271px;width:1px;height:17px;background:#808080"></div>
<div style="left:149px;top:287px;width:11px;height:1px;background:#808080"></div>
<div style="left:160px;top:271px;width:1px;height:18px;background:#000"></div>
<div style="left:149px;top:288px;width:12px;height:1px;background:#000"></div>
<div style="left:161px;top:288px;width:617px;height:1px;background:#c0c0c0"></div>
<div style="left:225px;top:271px;width:1px;height:18px;background:#c0c0c0"></div>
<div style="left:530px;top:271px;width:1px;height:18px;background:#c0c0c0"></div>
<div class="t" style="left:162px;top:274px;width:60px;text-align:right;color:#800000;font-size:10px;line-height:14px;letter-spacing:0.3px">13</div>
<div class="t" style="left:227px;top:274px;font-size:10px;line-height:14px;word-spacing:0.6px">SONIA APARECIDA GONCALVES*</div>
<div class="t" style="left:532px;top:274px;font-size:10px;line-height:14px;word-spacing:0.6px">SONIA APARECIDA GONCALVES</div>
<div style="left:149px;top:289px;width:11px;height:17px;background:#d4d0c8"></div>
<div style="left:149px;top:289px;width:11px;height:1px;background:#fff"></div>
<div style="left:149px;top:289px;width:1px;height:17px;background:#fff"></div>
<div style="left:159px;top:289px;width:1px;height:17px;background:#808080"></div>
<div style="left:149px;top:305px;width:11px;height:1px;background:#808080"></div>
<div style="left:160px;top:289px;width:1px;height:18px;background:#000"></div>
<div style="left:149px;top:306px;width:12px;height:1px;background:#000"></div>
<div style="left:161px;top:306px;width:617px;height:1px;background:#c0c0c0"></div>
<div style="left:225px;top:289px;width:1px;height:18px;background:#c0c0c0"></div>
<div style="left:530px;top:289px;width:1px;height:18px;background:#c0c0c0"></div>
<div class="t" style="left:162px;top:292px;width:60px;text-align:right;color:#800000;font-size:10px;line-height:14px;letter-spacing:0.3px">14</div>
<div class="t" style="left:227px;top:292px;font-size:10px;line-height:14px;word-spacing:0.6px">MAROTA &amp; SANT'ANNA LTDA</div>
<div class="t" style="left:532px;top:292px;font-size:10px;line-height:14px;word-spacing:0.6px">SUPERM. MAROTA - SM, SM2</div>
<div style="left:149px;top:307px;width:11px;height:17px;background:#d4d0c8"></div>
<div style="left:149px;top:307px;width:11px;height:1px;background:#fff"></div>
<div style="left:149px;top:307px;width:1px;height:17px;background:#fff"></div>
<div style="left:159px;top:307px;width:1px;height:17px;background:#808080"></div>
<div style="left:149px;top:323px;width:11px;height:1px;background:#808080"></div>
<div style="left:160px;top:307px;width:1px;height:18px;background:#000"></div>
<div style="left:149px;top:324px;width:12px;height:1px;background:#000"></div>
<div style="left:161px;top:324px;width:617px;height:1px;background:#c0c0c0"></div>
<div style="left:225px;top:307px;width:1px;height:18px;background:#c0c0c0"></div>
<div style="left:530px;top:307px;width:1px;height:18px;background:#c0c0c0"></div>
<div class="t" style="left:162px;top:310px;width:60px;text-align:right;color:#800000;font-size:10px;line-height:14px;letter-spacing:0.3px">1243</div>
<div class="t" style="left:227px;top:310px;font-size:10px;line-height:14px;word-spacing:0.6px">PEBS LINGERIE LTDA</div>
<div class="t" style="left:532px;top:310px;font-size:10px;line-height:14px;word-spacing:0.6px">A LIBANESA</div>
<div style="left:149px;top:325px;width:11px;height:17px;background:#d4d0c8"></div>
<div style="left:149px;top:325px;width:11px;height:1px;background:#fff"></div>
<div style="left:149px;top:325px;width:1px;height:17px;background:#fff"></div>
<div style="left:159px;top:325px;width:1px;height:17px;background:#808080"></div>
<div style="left:149px;top:341px;width:11px;height:1px;background:#808080"></div>
<div style="left:160px;top:325px;width:1px;height:18px;background:#000"></div>
<div style="left:149px;top:342px;width:12px;height:1px;background:#000"></div>
<div style="left:161px;top:342px;width:617px;height:1px;background:#c0c0c0"></div>
<div style="left:225px;top:325px;width:1px;height:18px;background:#c0c0c0"></div>
<div style="left:530px;top:325px;width:1px;height:18px;background:#c0c0c0"></div>
<div class="t" style="left:162px;top:328px;width:60px;text-align:right;color:#800000;font-size:10px;line-height:14px;letter-spacing:0.3px">16</div>
<div class="t" style="left:227px;top:328px;font-size:10px;line-height:14px;word-spacing:0.6px">COOPASUL - COOPER. DE CONS. DA UFV*</div>
<div class="t" style="left:532px;top:328px;font-size:10px;line-height:14px;word-spacing:0.6px">COOPASUL - COOP1 - COOP2</div>
<div style="left:149px;top:343px;width:11px;height:17px;background:#d4d0c8"></div>
<div style="left:149px;top:343px;width:11px;height:1px;background:#fff"></div>
<div style="left:149px;top:343px;width:1px;height:17px;background:#fff"></div>
<div style="left:159px;top:343px;width:1px;height:17px;background:#808080"></div>
<div style="left:149px;top:359px;width:11px;height:1px;background:#808080"></div>
<div style="left:160px;top:343px;width:1px;height:18px;background:#000"></div>
<div style="left:149px;top:360px;width:12px;height:1px;background:#000"></div>
<div style="left:161px;top:360px;width:617px;height:1px;background:#c0c0c0"></div>
<div style="left:225px;top:343px;width:1px;height:18px;background:#c0c0c0"></div>
<div style="left:530px;top:343px;width:1px;height:18px;background:#c0c0c0"></div>
<div class="t" style="left:162px;top:346px;width:60px;text-align:right;color:#800000;font-size:10px;line-height:14px;letter-spacing:0.3px">1201</div>
<div class="t" style="left:227px;top:346px;font-size:10px;line-height:14px;word-spacing:0.6px">AUTO PECAS RENGAW LTDA</div>
<div class="t" style="left:532px;top:346px;font-size:10px;line-height:14px;word-spacing:0.6px">AUTO PECAS RENGAW</div>
<div style="left:149px;top:361px;width:11px;height:17px;background:#d4d0c8"></div>
<div style="left:149px;top:361px;width:11px;height:1px;background:#fff"></div>
<div style="left:149px;top:361px;width:1px;height:17px;background:#fff"></div>
<div style="left:159px;top:361px;width:1px;height:17px;background:#808080"></div>
<div style="left:149px;top:377px;width:11px;height:1px;background:#808080"></div>
<div style="left:160px;top:361px;width:1px;height:18px;background:#000"></div>
<div style="left:149px;top:378px;width:12px;height:1px;background:#000"></div>
<div style="left:161px;top:378px;width:617px;height:1px;background:#c0c0c0"></div>
<div style="left:225px;top:361px;width:1px;height:18px;background:#c0c0c0"></div>
<div style="left:530px;top:361px;width:1px;height:18px;background:#c0c0c0"></div>
<div class="t" style="left:162px;top:364px;width:60px;text-align:right;color:#800000;font-size:10px;line-height:14px;letter-spacing:0.3px">17</div>
<div class="t" style="left:227px;top:364px;font-size:10px;line-height:14px;word-spacing:0.6px">INSTITUTO MUN. ASSIST. AO SERVIDOR</div>
<div class="t" style="left:532px;top:364px;font-size:10px;line-height:14px;word-spacing:0.6px">IMAS - IMAS</div>
<div style="left:149px;top:379px;width:11px;height:17px;background:#d4d0c8"></div>
<div style="left:149px;top:379px;width:11px;height:1px;background:#fff"></div>
<div style="left:149px;top:379px;width:1px;height:17px;background:#fff"></div>
<div style="left:159px;top:379px;width:1px;height:17px;background:#808080"></div>
<div style="left:149px;top:395px;width:11px;height:1px;background:#808080"></div>
<div style="left:160px;top:379px;width:1px;height:18px;background:#000"></div>
<div style="left:149px;top:396px;width:12px;height:1px;background:#000"></div>
<div style="left:161px;top:396px;width:617px;height:1px;background:#c0c0c0"></div>
<div style="left:225px;top:379px;width:1px;height:18px;background:#c0c0c0"></div>
<div style="left:530px;top:379px;width:1px;height:18px;background:#c0c0c0"></div>
<div class="t" style="left:162px;top:382px;width:60px;text-align:right;color:#800000;font-size:10px;line-height:14px;letter-spacing:0.3px">18</div>
<div class="t" style="left:227px;top:382px;font-size:10px;line-height:14px;word-spacing:0.6px">COMERCIAL PRETONY MAT. DE CONST. LTDA</div>
<div class="t" style="left:532px;top:382px;font-size:10px;line-height:14px;word-spacing:0.6px">COMERCIAL PRETONY LTDA - 18</div>
<div style="left:149px;top:397px;width:11px;height:17px;background:#d4d0c8"></div>
<div style="left:149px;top:397px;width:11px;height:1px;background:#fff"></div>
<div style="left:149px;top:397px;width:1px;height:17px;background:#fff"></div>
<div style="left:159px;top:397px;width:1px;height:17px;background:#808080"></div>
<div style="left:149px;top:413px;width:11px;height:1px;background:#808080"></div>
<div style="left:160px;top:397px;width:1px;height:18px;background:#000"></div>
<div style="left:149px;top:414px;width:12px;height:1px;background:#000"></div>
<div style="left:161px;top:414px;width:617px;height:1px;background:#c0c0c0"></div>
<div style="left:225px;top:397px;width:1px;height:18px;background:#c0c0c0"></div>
<div style="left:530px;top:397px;width:1px;height:18px;background:#c0c0c0"></div>
<div class="t" style="left:162px;top:400px;width:60px;text-align:right;color:#800000;font-size:10px;line-height:14px;letter-spacing:0.3px">19</div>
<div class="t" style="left:227px;top:400px;font-size:10px;line-height:14px;word-spacing:0.6px">BAR LEAO*</div>
<div class="t" style="left:532px;top:400px;font-size:10px;line-height:14px;word-spacing:0.6px">BAR LEAO</div>
<div style="left:149px;top:415px;width:11px;height:17px;background:#d4d0c8"></div>
<div style="left:149px;top:415px;width:11px;height:1px;background:#fff"></div>
<div style="left:149px;top:415px;width:1px;height:17px;background:#fff"></div>
<div style="left:159px;top:415px;width:1px;height:17px;background:#808080"></div>
<div style="left:149px;top:431px;width:11px;height:1px;background:#808080"></div>
<div style="left:160px;top:415px;width:1px;height:18px;background:#000"></div>
<div style="left:149px;top:432px;width:12px;height:1px;background:#000"></div>
<div style="left:161px;top:432px;width:617px;height:1px;background:#c0c0c0"></div>
<div style="left:225px;top:415px;width:1px;height:18px;background:#c0c0c0"></div>
<div style="left:530px;top:415px;width:1px;height:18px;background:#c0c0c0"></div>
<div class="t" style="left:162px;top:418px;width:60px;text-align:right;color:#800000;font-size:10px;line-height:14px;letter-spacing:0.3px">22</div>
<div class="t" style="left:227px;top:418px;font-size:10px;line-height:14px;word-spacing:0.6px">JOSE PAULO DIAS DO CARMO</div>
<div class="t" style="left:532px;top:418px;font-size:10px;line-height:14px;word-spacing:0.6px">JOSE PAULO DIAS DO CARMO-ROFER</div>
<div style="left:149px;top:433px;width:11px;height:17px;background:#d4d0c8"></div>
<div style="left:149px;top:433px;width:11px;height:1px;background:#fff"></div>
<div style="left:149px;top:433px;width:1px;height:17px;background:#fff"></div>
<div style="left:159px;top:433px;width:1px;height:17px;background:#808080"></div>
<div style="left:149px;top:449px;width:11px;height:1px;background:#808080"></div>
<div style="left:160px;top:433px;width:1px;height:18px;background:#000"></div>
<div style="left:149px;top:450px;width:12px;height:1px;background:#000"></div>
<div style="left:161px;top:450px;width:617px;height:1px;background:#c0c0c0"></div>
<div style="left:225px;top:433px;width:1px;height:18px;background:#c0c0c0"></div>
<div style="left:530px;top:433px;width:1px;height:18px;background:#c0c0c0"></div>
<div class="t" style="left:162px;top:436px;width:60px;text-align:right;color:#800000;font-size:10px;line-height:14px;letter-spacing:0.3px">23</div>
<div class="t" style="left:227px;top:436px;font-size:10px;line-height:14px;word-spacing:0.6px">PAULO ANTONIO DIAS</div>
<div class="t" style="left:532px;top:436px;font-size:10px;line-height:14px;word-spacing:0.6px">COMERCIO CARRIN - CAR</div>
<div style="left:149px;top:451px;width:11px;height:17px;background:#d4d0c8"></div>
<div style="left:149px;top:451px;width:11px;height:1px;background:#fff"></div>
<div style="left:149px;top:451px;width:1px;height:17px;background:#fff"></div>
<div style="left:159px;top:451px;width:1px;height:17px;background:#808080"></div>
<div style="left:149px;top:467px;width:11px;height:1px;background:#808080"></div>
<div style="left:160px;top:451px;width:1px;height:18px;background:#000"></div>
<div style="left:149px;top:468px;width:12px;height:1px;background:#000"></div>
<div style="left:161px;top:468px;width:617px;height:1px;background:#c0c0c0"></div>
<div style="left:225px;top:451px;width:1px;height:18px;background:#c0c0c0"></div>
<div style="left:530px;top:451px;width:1px;height:18px;background:#c0c0c0"></div>
<div class="t" style="left:162px;top:454px;width:60px;text-align:right;color:#800000;font-size:10px;line-height:14px;letter-spacing:0.3px">24</div>
<div class="t" style="left:227px;top:454px;font-size:10px;line-height:14px;word-spacing:0.6px">COMERCIO IMAOS VIEIRA LTDA*</div>
<div class="t" style="left:532px;top:454px;font-size:10px;line-height:14px;word-spacing:0.6px">COMERCIO IMAOS VIEIRA LTDA</div>
<div style="left:149px;top:469px;width:11px;height:17px;background:#d4d0c8"></div>
<div style="left:149px;top:469px;width:11px;height:1px;background:#fff"></div>
<div style="left:149px;top:469px;width:1px;height:17px;background:#fff"></div>
<div style="left:159px;top:469px;width:1px;height:17px;background:#808080"></div>
<div style="left:149px;top:485px;width:11px;height:1px;background:#808080"></div>
<div style="left:160px;top:469px;width:1px;height:18px;background:#000"></div>
<div style="left:149px;top:486px;width:12px;height:1px;background:#000"></div>
<div style="left:161px;top:486px;width:617px;height:1px;background:#c0c0c0"></div>
<div style="left:225px;top:469px;width:1px;height:18px;background:#c0c0c0"></div>
<div style="left:530px;top:469px;width:1px;height:18px;background:#c0c0c0"></div>
<div class="t" style="left:162px;top:472px;width:60px;text-align:right;color:#800000;font-size:10px;line-height:14px;letter-spacing:0.3px">1218</div>
<div class="t" style="left:227px;top:472px;font-size:10px;line-height:14px;word-spacing:0.6px">LOGEL COM. DE CONFECCOES LTDA</div>
<div class="t" style="left:532px;top:472px;font-size:10px;line-height:14px;word-spacing:0.6px">LOGEL COM. DE CONFECCOES LTDA</div>
<div style="left:149px;top:487px;width:11px;height:17px;background:#d4d0c8"></div>
<div style="left:149px;top:487px;width:11px;height:1px;background:#fff"></div>
<div style="left:149px;top:487px;width:1px;height:17px;background:#fff"></div>
<div style="left:159px;top:487px;width:1px;height:17px;background:#808080"></div>
<div style="left:149px;top:503px;width:11px;height:1px;background:#808080"></div>
<div style="left:160px;top:487px;width:1px;height:18px;background:#000"></div>
<div style="left:149px;top:504px;width:12px;height:1px;background:#000"></div>
<div style="left:161px;top:504px;width:617px;height:1px;background:#c0c0c0"></div>
<div style="left:225px;top:487px;width:1px;height:18px;background:#c0c0c0"></div>
<div style="left:530px;top:487px;width:1px;height:18px;background:#c0c0c0"></div>
<div class="t" style="left:162px;top:490px;width:60px;text-align:right;color:#800000;font-size:10px;line-height:14px;letter-spacing:0.3px">26</div>
<div class="t" style="left:227px;top:490px;font-size:10px;line-height:14px;word-spacing:0.6px">DROG. SAO SEBASTIAO DE MIRAHY LTDA</div>
<div class="t" style="left:532px;top:490px;font-size:10px;line-height:14px;word-spacing:0.6px">FARM. SAO SEBASTIAO - FSS</div>
<div style="left:149px;top:505px;width:11px;height:17px;background:#d4d0c8"></div>
<div style="left:149px;top:505px;width:11px;height:1px;background:#fff"></div>
<div style="left:149px;top:505px;width:1px;height:17px;background:#fff"></div>
<div style="left:159px;top:505px;width:1px;height:17px;background:#808080"></div>
<div style="left:149px;top:521px;width:11px;height:1px;background:#808080"></div>
<div style="left:160px;top:505px;width:1px;height:18px;background:#000"></div>
<div style="left:149px;top:522px;width:12px;height:1px;background:#000"></div>
<div style="left:161px;top:522px;width:617px;height:1px;background:#c0c0c0"></div>
<div style="left:225px;top:505px;width:1px;height:18px;background:#c0c0c0"></div>
<div style="left:530px;top:505px;width:1px;height:18px;background:#c0c0c0"></div>
<div class="t" style="left:162px;top:508px;width:60px;text-align:right;color:#800000;font-size:10px;line-height:14px;letter-spacing:0.3px">28</div>
<div class="t" style="left:227px;top:508px;font-size:10px;line-height:14px;word-spacing:0.6px">JOAO MAURO BARROS BARBOSA*</div>
<div class="t" style="left:532px;top:508px;font-size:10px;line-height:14px;word-spacing:0.6px">JOAO MAURO BARROS BARBOSA -JMB</div>
<div style="left:149px;top:523px;width:11px;height:17px;background:#d4d0c8"></div>
<div style="left:149px;top:523px;width:11px;height:1px;background:#fff"></div>
<div style="left:149px;top:523px;width:1px;height:17px;background:#fff"></div>
<div style="left:159px;top:523px;width:1px;height:17px;background:#808080"></div>
<div style="left:149px;top:539px;width:11px;height:1px;background:#808080"></div>
<div style="left:160px;top:523px;width:1px;height:18px;background:#000"></div>
<div style="left:149px;top:540px;width:12px;height:1px;background:#000"></div>
<div style="left:161px;top:540px;width:617px;height:1px;background:#c0c0c0"></div>
<div style="left:225px;top:523px;width:1px;height:18px;background:#c0c0c0"></div>
<div style="left:530px;top:523px;width:1px;height:18px;background:#c0c0c0"></div>
<div class="t" style="left:162px;top:526px;width:60px;text-align:right;color:#800000;font-size:10px;line-height:14px;letter-spacing:0.3px">31</div>
<div class="t" style="left:227px;top:526px;font-size:10px;line-height:14px;word-spacing:0.6px">FAB. DE MOVEIS SANTA RITA LTDA - EPP</div>
<div class="t" style="left:532px;top:526px;font-size:10px;line-height:14px;word-spacing:0.6px">FAB. MOV. ST RITA - FMSR1</div>
<svg style="position:absolute;left:149px;top:145px" width="11" height="17" viewBox="0 0 11 17" shape-rendering="crispEdges"><path d="M3 3h1v1h1v1h1v1h1v1h1v1h-1v1h-1v1h-1v1h-1v1h-1z" fill="#000"/></svg>
<div style="left:778px;top:110px;width:18px;height:446px;background:repeating-conic-gradient(#fff 0 25%,#d4d0c8 0 50%) 0 0/2px 2px"></div>
<div style="left:778px;top:110px;width:18px;height:18px;background:#404040"></div>
<div style="left:778px;top:110px;width:17px;height:17px;background:#d4d0c8"></div>
<div style="left:779px;top:111px;width:16px;height:16px;background:#808080"></div>
<div style="left:779px;top:111px;width:15px;height:15px;background:#fff"></div>
<div style="left:780px;top:112px;width:14px;height:14px;background:#d4d0c8"></div>
<svg style="position:absolute;left:778px;top:110px" width="18" height="18" viewBox="0 0 18 18" shape-rendering="crispEdges"><path d="M8 6h1v1h1v1h1v1h1v1h-7v-1h1v-1h1v-1h1z" fill="#000"/></svg>
<div style="left:778px;top:128px;width:18px;height:18px;background:#404040"></div>
<div style="left:778px;top:128px;width:17px;height:17px;background:#d4d0c8"></div>
<div style="left:779px;top:129px;width:16px;height:16px;background:#808080"></div>
<div style="left:779px;top:129px;width:15px;height:15px;background:#fff"></div>
<div style="left:780px;top:130px;width:14px;height:14px;background:#d4d0c8"></div>
<div style="left:778px;top:538px;width:18px;height:18px;background:#404040"></div>
<div style="left:778px;top:538px;width:17px;height:17px;background:#d4d0c8"></div>
<div style="left:779px;top:539px;width:16px;height:16px;background:#808080"></div>
<div style="left:779px;top:539px;width:15px;height:15px;background:#fff"></div>
<div style="left:780px;top:540px;width:14px;height:14px;background:#d4d0c8"></div>
<svg style="position:absolute;left:778px;top:538px" width="18" height="18" viewBox="0 0 18 18" shape-rendering="crispEdges"><path d="M5 7h7v1h-1v1h-1v1h-1v1h-1v-1h-1v-1h-1v-1h-1z" fill="#000"/></svg>
<div style="left:149px;top:556px;width:629px;height:18px;background:repeating-conic-gradient(#fff 0 25%,#d4d0c8 0 50%) 0 0/2px 2px"></div>
<div style="left:149px;top:556px;width:18px;height:18px;background:#404040"></div>
<div style="left:149px;top:556px;width:17px;height:17px;background:#d4d0c8"></div>
<div style="left:150px;top:557px;width:16px;height:16px;background:#808080"></div>
<div style="left:150px;top:557px;width:15px;height:15px;background:#fff"></div>
<div style="left:151px;top:558px;width:14px;height:14px;background:#d4d0c8"></div>
<svg style="position:absolute;left:149px;top:556px" width="18" height="18" viewBox="0 0 18 18" shape-rendering="crispEdges"><path d="M10 5v7h-1v-1h-1v-1h-1v-1h-1v-1h1v-1h1v-1h1v-1z" fill="#000"/></svg>
<div style="left:167px;top:556px;width:18px;height:18px;background:#404040"></div>
<div style="left:167px;top:556px;width:17px;height:17px;background:#d4d0c8"></div>
<div style="left:168px;top:557px;width:16px;height:16px;background:#808080"></div>
<div style="left:168px;top:557px;width:15px;height:15px;background:#fff"></div>
<div style="left:169px;top:558px;width:14px;height:14px;background:#d4d0c8"></div>
<div style="left:760px;top:556px;width:18px;height:18px;background:#404040"></div>
<div style="left:760px;top:556px;width:17px;height:17px;background:#d4d0c8"></div>
<div style="left:761px;top:557px;width:16px;height:16px;background:#808080"></div>
<div style="left:761px;top:557px;width:15px;height:15px;background:#fff"></div>
<div style="left:762px;top:558px;width:14px;height:14px;background:#d4d0c8"></div>
<svg style="position:absolute;left:760px;top:556px" width="18" height="18" viewBox="0 0 18 18" shape-rendering="crispEdges"><path d="M7 5v7h1v-1h1v-1h1v-1h1v-1h-1v-1h-1v-1h-1v-1z" fill="#000"/></svg>
<div style="left:778px;top:556px;width:18px;height:18px;background:#d4d0c8"></div>
<div style="left:724px;top:585px;width:75px;height:25px;background:#404040"></div>
<div style="left:724px;top:585px;width:74px;height:24px;background:#fff"></div>
<div style="left:725px;top:586px;width:73px;height:23px;background:#808080"></div>
<div style="left:725px;top:586px;width:72px;height:22px;background:#d4d0c8"></div>
<div class="t" style="left:765px;top:591px;font-size:11px;line-height:14px;letter-spacing:0px">Sair</div>
<svg style="position:absolute;left:740px;top:590px" width="17" height="16" shape-rendering="crispEdges"><rect x="5" y="0" width="11" height="1" fill="#000"/><rect x="5" y="1" width="1" height="1" fill="#000"/><rect x="6" y="1" width="4" height="1" fill="#ffff00"/><rect x="10" y="1" width="2" height="1" fill="#000"/><rect x="12" y="1" width="1" height="1" fill="#fff"/><rect x="13" y="1" width="3" height="1" fill="#000"/><rect x="5" y="2" width="1" height="1" fill="#000"/><rect x="6" y="2" width="3" height="1" fill="#ffff00"/><rect x="9" y="2" width="1" height="1" fill="#000"/><rect x="10" y="2" width="1" height="1" fill="#fff"/><rect x="11" y="2" width="1" height="1" fill="#808000"/><rect x="12" y="2" width="1" height="1" fill="#808080"/><rect x="13" y="2" width="1" height="1" fill="#808000"/><rect x="14" y="2" width="1" height="1" fill="#808080"/><rect x="15" y="2" width="1" height="1" fill="#000"/><rect x="5" y="3" width="1" height="1" fill="#000"/><rect x="6" y="3" width="1" height="1" fill="#ffff00"/><rect x="7" y="3" width="2" height="1" fill="#000"/><rect x="9" y="3" width="1" height="1" fill="#fff"/><rect x="10" y="3" width="1" height="1" fill="#808080"/><rect x="11" y="3" width="1" height="1" fill="#808000"/><rect x="12" y="3" width="1" height="1" fill="#808080"/><rect x="13" y="3" width="1" height="1" fill="#808000"/><rect x="14" y="3" width="1" height="1" fill="#808080"/><rect x="15" y="3" width="1" height="1" fill="#000"/><rect x="5" y="4" width="1" height="1" fill="#000"/><rect x="6" y="4" width="1" height="1" fill="#ffff00"/><rect x="7" y="4" width="1" height="1" fill="#000"/><rect x="9" y="4" width="1" height="1" fill="#fff"/><rect x="10" y="4" width="1" height="1" fill="#808000"/><rect x="11" y="4" width="1" height="1" fill="#808080"/><rect x="12" y="4" width="1" height="1" fill="#808000"/><rect x="13" y="4" width="1" height="1" fill="#808080"/><rect x="14" y="4" width="1" height="1" fill="#808000"/><rect x="15" y="4" width="1" height="1" fill="#000"/><rect x="5" y="5" width="1" height="1" fill="#000"/><rect x="6" y="5" width="1" height="1" fill="#ffff00"/><rect x="7" y="5" width="1" height="1" fill="#000"/><rect x="9" y="5" width="1" height="1" fill="#fff"/><rect x="10" y="5" width="1" height="1" fill="#808080"/><rect x="11" y="5" width="1" height="1" fill="#808000"/><rect x="12" y="5" width="1" height="1" fill="#808080"/><rect x="13" y="5" width="1" height="1" fill="#808000"/><rect x="14" y="5" width="1" height="1" fill="#808080"/><rect x="15" y="5" width="1" height="1" fill="#000"/><rect x="5" y="6" width="1" height="1" fill="#000"/><rect x="6" y="6" width="1" height="1" fill="#ffff00"/><rect x="7" y="6" width="1" height="1" fill="#000"/><rect x="9" y="6" width="1" height="1" fill="#fff"/><rect x="10" y="6" width="1" height="1" fill="#808000"/><rect x="11" y="6" width="1" height="1" fill="#808080"/><rect x="12" y="6" width="1" height="1" fill="#808000"/><rect x="13" y="6" width="1" height="1" fill="#808080"/><rect x="14" y="6" width="1" height="1" fill="#808000"/><rect x="15" y="6" width="1" height="1" fill="#000"/><rect x="5" y="7" width="1" height="1" fill="#000"/><rect x="6" y="7" width="1" height="1" fill="#ffff00"/><rect x="7" y="7" width="1" height="1" fill="#000"/><rect x="9" y="7" width="1" height="1" fill="#fff"/><rect x="10" y="7" width="1" height="1" fill="#808080"/><rect x="11" y="7" width="1" height="1" fill="#808000"/><rect x="12" y="7" width="1" height="1" fill="#808080"/><rect x="13" y="7" width="1" height="1" fill="#808000"/><rect x="14" y="7" width="1" height="1" fill="#808080"/><rect x="15" y="7" width="1" height="1" fill="#000"/><rect x="5" y="8" width="1" height="1" fill="#000"/><rect x="6" y="8" width="1" height="1" fill="#ffff00"/><rect x="7" y="8" width="1" height="1" fill="#000"/><rect x="9" y="8" width="1" height="1" fill="#fff"/><rect x="10" y="8" width="2" height="1" fill="#000"/><rect x="12" y="8" width="1" height="1" fill="#808080"/><rect x="13" y="8" width="1" height="1" fill="#808000"/><rect x="14" y="8" width="1" height="1" fill="#808080"/><rect x="15" y="8" width="1" height="1" fill="#000"/><rect x="5" y="9" width="1" height="1" fill="#000"/><rect x="6" y="9" width="1" height="1" fill="#ffff00"/><rect x="7" y="9" width="1" height="1" fill="#000"/><rect x="9" y="9" width="1" height="1" fill="#fff"/><rect x="10" y="9" width="1" height="1" fill="#808000"/><rect x="11" y="9" width="1" height="1" fill="#808080"/><rect x="12" y="9" width="1" height="1" fill="#808000"/><rect x="13" y="9" width="1" height="1" fill="#808080"/><rect x="14" y="9" width="1" height="1" fill="#808000"/><rect x="15" y="9" width="1" height="1" fill="#000"/><rect x="5" y="10" width="1" height="1" fill="#000"/><rect x="6" y="10" width="1" height="1" fill="#ffff00"/><rect x="7" y="10" width="1" height="1" fill="#000"/><rect x="9" y="10" width="1" height="1" fill="#fff"/><rect x="10" y="10" width="1" height="1" fill="#808080"/><rect x="11" y="10" width="1" height="1" fill="#808000"/><rect x="12" y="10" width="1" height="1" fill="#808080"/><rect x="13" y="10" width="1" height="1" fill="#808000"/><rect x="14" y="10" width="1" height="1" fill="#808080"/><rect x="15" y="10" width="1" height="1" fill="#000"/><rect x="5" y="11" width="1" height="1" fill="#000"/><rect x="6" y="11" width="1" height="1" fill="#ffff00"/><rect x="7" y="11" width="1" height="1" fill="#000"/><rect x="9" y="11" width="1" height="1" fill="#fff"/><rect x="10" y="11" width="1" height="1" fill="#808000"/><rect x="11" y="11" width="1" height="1" fill="#808080"/><rect x="12" y="11" width="1" height="1" fill="#808000"/><rect x="13" y="11" width="1" height="1" fill="#808080"/><rect x="14" y="11" width="1" height="1" fill="#808000"/><rect x="15" y="11" width="1" height="1" fill="#000"/><rect x="0" y="12" width="8" height="1" fill="#000"/><rect x="9" y="12" width="1" height="1" fill="#fff"/><rect x="10" y="12" width="1" height="1" fill="#808080"/><rect x="11" y="12" width="1" height="1" fill="#808000"/><rect x="12" y="12" width="1" height="1" fill="#808080"/><rect x="13" y="12" width="1" height="1" fill="#808000"/><rect x="14" y="12" width="2" height="1" fill="#000"/><rect x="0" y="13" width="1" height="1" fill="#808000"/><rect x="2" y="13" width="1" height="1" fill="#808000"/><rect x="4" y="13" width="1" height="1" fill="#808000"/><rect x="6" y="13" width="1" height="1" fill="#808000"/><rect x="7" y="13" width="1" height="1" fill="#000"/><rect x="9" y="13" width="1" height="1" fill="#fff"/><rect x="10" y="13" width="1" height="1" fill="#808000"/><rect x="11" y="13" width="1" height="1" fill="#808080"/><rect x="12" y="13" width="1" height="1" fill="#808000"/><rect x="13" y="13" width="1" height="1" fill="#000"/><rect x="14" y="13" width="1" height="1" fill="#808000"/><rect x="1" y="14" width="1" height="1" fill="#808000"/><rect x="3" y="14" width="1" height="1" fill="#808000"/><rect x="5" y="14" width="1" height="1" fill="#808000"/><rect x="7" y="14" width="1" height="1" fill="#808000"/><rect x="8" y="14" width="2" height="1" fill="#000"/><rect x="10" y="14" width="1" height="1" fill="#808000"/><rect x="11" y="14" width="2" height="1" fill="#000"/><rect x="13" y="14" width="1" height="1" fill="#808000"/><rect x="15" y="14" width="1" height="1" fill="#808000"/><rect x="0" y="15" width="1" height="1" fill="#808000"/><rect x="2" y="15" width="1" height="1" fill="#808000"/><rect x="4" y="15" width="1" height="1" fill="#808000"/><rect x="6" y="15" width="1" height="1" fill="#808000"/><rect x="8" y="15" width="1" height="1" fill="#808000"/><rect x="10" y="15" width="2" height="1" fill="#000"/><rect x="13" y="15" width="1" height="1" fill="#808000"/><rect x="15" y="15" width="1" height="1" fill="#808000"/></svg>
<div style="left:20px;top:125px;width:1px;height:1px;background:#808080"></div>
<div style="left:20px;top:127px;width:1px;height:1px;background:#808080"></div>
<div style="left:20px;top:129px;width:1px;height:1px;background:#808080"></div>
<div style="left:20px;top:131px;width:1px;height:1px;background:#808080"></div>
<div style="left:20px;top:133px;width:1px;height:1px;background:#808080"></div>
<div style="left:20px;top:135px;width:1px;height:1px;background:#808080"></div>
<div style="left:20px;top:137px;width:1px;height:1px;background:#808080"></div>
<div style="left:20px;top:139px;width:1px;height:1px;background:#808080"></div>
<div style="left:20px;top:141px;width:1px;height:1px;background:#808080"></div>
<div style="left:20px;top:143px;width:1px;height:1px;background:#808080"></div>
<div style="left:20px;top:145px;width:1px;height:1px;background:#808080"></div>
<div style="left:20px;top:147px;width:1px;height:1px;background:#808080"></div>
<div style="left:20px;top:149px;width:1px;height:1px;background:#808080"></div>
<div style="left:20px;top:151px;width:1px;height:1px;background:#808080"></div>
<div style="left:20px;top:153px;width:1px;height:1px;background:#808080"></div>
<div style="left:20px;top:155px;width:1px;height:1px;background:#808080"></div>
<div style="left:20px;top:157px;width:1px;height:1px;background:#808080"></div>
<div style="left:20px;top:159px;width:1px;height:1px;background:#808080"></div>
<div style="left:20px;top:161px;width:1px;height:1px;background:#808080"></div>
<div style="left:20px;top:163px;width:1px;height:1px;background:#808080"></div>
<div style="left:20px;top:165px;width:1px;height:1px;background:#808080"></div>
<div style="left:20px;top:167px;width:1px;height:1px;background:#808080"></div>
<div style="left:20px;top:169px;width:1px;height:1px;background:#808080"></div>
<div style="left:20px;top:171px;width:1px;height:1px;background:#808080"></div>
<div style="left:20px;top:173px;width:1px;height:1px;background:#808080"></div>
<div style="left:20px;top:175px;width:1px;height:1px;background:#808080"></div>
<div style="left:20px;top:177px;width:1px;height:1px;background:#808080"></div>
<div style="left:20px;top:179px;width:1px;height:1px;background:#808080"></div>
<div style="left:20px;top:181px;width:1px;height:1px;background:#808080"></div>
<div style="left:20px;top:183px;width:1px;height:1px;background:#808080"></div>
<div style="left:20px;top:185px;width:1px;height:1px;background:#808080"></div>
<div style="left:20px;top:187px;width:1px;height:1px;background:#808080"></div>
<div style="left:20px;top:189px;width:1px;height:1px;background:#808080"></div>
<div style="left:20px;top:191px;width:1px;height:1px;background:#808080"></div>
<div style="left:20px;top:193px;width:1px;height:1px;background:#808080"></div>
<div style="left:20px;top:195px;width:1px;height:1px;background:#808080"></div>
<div style="left:20px;top:197px;width:1px;height:1px;background:#808080"></div>
<div style="left:20px;top:199px;width:1px;height:1px;background:#808080"></div>
<div style="left:20px;top:201px;width:1px;height:1px;background:#808080"></div>
<div style="left:20px;top:203px;width:1px;height:1px;background:#808080"></div>
<div style="left:20px;top:205px;width:1px;height:1px;background:#808080"></div>
<div style="left:20px;top:207px;width:1px;height:1px;background:#808080"></div>
<div style="left:20px;top:209px;width:1px;height:1px;background:#808080"></div>
<div style="left:20px;top:211px;width:1px;height:1px;background:#808080"></div>
<div style="left:20px;top:213px;width:1px;height:1px;background:#808080"></div>
<div style="left:20px;top:215px;width:1px;height:1px;background:#808080"></div>
<div style="left:20px;top:217px;width:1px;height:1px;background:#808080"></div>
<div style="left:20px;top:219px;width:1px;height:1px;background:#808080"></div>
<div style="left:20px;top:221px;width:1px;height:1px;background:#808080"></div>
<div style="left:20px;top:223px;width:1px;height:1px;background:#808080"></div>
<div style="left:20px;top:225px;width:1px;height:1px;background:#808080"></div>
<div style="left:39px;top:141px;width:1px;height:1px;background:#808080"></div>
<div style="left:39px;top:143px;width:1px;height:1px;background:#808080"></div>
<div style="left:39px;top:145px;width:1px;height:1px;background:#808080"></div>
<div style="left:39px;top:147px;width:1px;height:1px;background:#808080"></div>
<div style="left:39px;top:149px;width:1px;height:1px;background:#808080"></div>
<div style="left:39px;top:151px;width:1px;height:1px;background:#808080"></div>
<div style="left:39px;top:153px;width:1px;height:1px;background:#808080"></div>
<div style="left:39px;top:155px;width:1px;height:1px;background:#808080"></div>
<div style="left:39px;top:157px;width:1px;height:1px;background:#808080"></div>
<div style="left:39px;top:159px;width:1px;height:1px;background:#808080"></div>
<div style="left:39px;top:161px;width:1px;height:1px;background:#808080"></div>
<div style="left:39px;top:163px;width:1px;height:1px;background:#808080"></div>
<div style="left:39px;top:165px;width:1px;height:1px;background:#808080"></div>
<div style="left:25px;top:133px;width:1px;height:1px;background:#808080"></div>
<div style="left:27px;top:133px;width:1px;height:1px;background:#808080"></div>
<div style="left:29px;top:133px;width:1px;height:1px;background:#808080"></div>
<div style="left:16px;top:129px;width:9px;height:9px;background:#fff;border:1px solid #808080;box-sizing:border-box"></div>
<div style="left:18px;top:133px;width:5px;height:1px;background:#000"></div>
<div style="left:40px;top:149px;width:1px;height:1px;background:#808080"></div>
<div style="left:42px;top:149px;width:1px;height:1px;background:#808080"></div>
<div style="left:44px;top:149px;width:1px;height:1px;background:#808080"></div>
<div style="left:46px;top:149px;width:1px;height:1px;background:#808080"></div>
<div style="left:48px;top:149px;width:1px;height:1px;background:#808080"></div>
<div style="left:50px;top:149px;width:1px;height:1px;background:#808080"></div>
<div style="left:40px;top:165px;width:1px;height:1px;background:#808080"></div>
<div style="left:42px;top:165px;width:1px;height:1px;background:#808080"></div>
<div style="left:44px;top:165px;width:1px;height:1px;background:#808080"></div>
<div style="left:46px;top:165px;width:1px;height:1px;background:#808080"></div>
<div style="left:48px;top:165px;width:1px;height:1px;background:#808080"></div>
<div style="left:50px;top:165px;width:1px;height:1px;background:#808080"></div>
<div style="left:39px;top:189px;width:1px;height:1px;background:#808080"></div>
<div style="left:39px;top:191px;width:1px;height:1px;background:#808080"></div>
<div style="left:39px;top:193px;width:1px;height:1px;background:#808080"></div>
<div style="left:39px;top:195px;width:1px;height:1px;background:#808080"></div>
<div style="left:39px;top:197px;width:1px;height:1px;background:#808080"></div>
<div style="left:39px;top:199px;width:1px;height:1px;background:#808080"></div>
<div style="left:39px;top:201px;width:1px;height:1px;background:#808080"></div>
<div style="left:39px;top:203px;width:1px;height:1px;background:#808080"></div>
<div style="left:39px;top:205px;width:1px;height:1px;background:#808080"></div>
<div style="left:39px;top:207px;width:1px;height:1px;background:#808080"></div>
<div style="left:39px;top:209px;width:1px;height:1px;background:#808080"></div>
<div style="left:39px;top:211px;width:1px;height:1px;background:#808080"></div>
<div style="left:39px;top:213px;width:1px;height:1px;background:#808080"></div>
<div style="left:25px;top:181px;width:1px;height:1px;background:#808080"></div>
<div style="left:27px;top:181px;width:1px;height:1px;background:#808080"></div>
<div style="left:29px;top:181px;width:1px;height:1px;background:#808080"></div>
<div style="left:16px;top:177px;width:9px;height:9px;background:#fff;border:1px solid #808080;box-sizing:border-box"></div>
<div style="left:18px;top:181px;width:5px;height:1px;background:#000"></div>
<div style="left:40px;top:197px;width:1px;height:1px;background:#808080"></div>
<div style="left:42px;top:197px;width:1px;height:1px;background:#808080"></div>
<div style="left:44px;top:197px;width:1px;height:1px;background:#808080"></div>
<div style="left:46px;top:197px;width:1px;height:1px;background:#808080"></div>
<div style="left:48px;top:197px;width:1px;height:1px;background:#808080"></div>
<div style="left:50px;top:197px;width:1px;height:1px;background:#808080"></div>
<div style="left:40px;top:213px;width:1px;height:1px;background:#808080"></div>
<div style="left:42px;top:213px;width:1px;height:1px;background:#808080"></div>
<div style="left:44px;top:213px;width:1px;height:1px;background:#808080"></div>
<div style="left:46px;top:213px;width:1px;height:1px;background:#808080"></div>
<div style="left:48px;top:213px;width:1px;height:1px;background:#808080"></div>
<div style="left:50px;top:213px;width:1px;height:1px;background:#808080"></div>
<div style="left:39px;top:237px;width:1px;height:1px;background:#808080"></div>
<div style="left:39px;top:239px;width:1px;height:1px;background:#808080"></div>
<div style="left:39px;top:241px;width:1px;height:1px;background:#808080"></div>
<div style="left:39px;top:243px;width:1px;height:1px;background:#808080"></div>
<div style="left:39px;top:245px;width:1px;height:1px;background:#808080"></div>
<div style="left:39px;top:247px;width:1px;height:1px;background:#808080"></div>
<div style="left:39px;top:249px;width:1px;height:1px;background:#808080"></div>
<div style="left:39px;top:251px;width:1px;height:1px;background:#808080"></div>
<div style="left:39px;top:253px;width:1px;height:1px;background:#808080"></div>
<div style="left:39px;top:255px;width:1px;height:1px;background:#808080"></div>
<div style="left:39px;top:257px;width:1px;height:1px;background:#808080"></div>
<div style="left:39px;top:259px;width:1px;height:1px;background:#808080"></div>
<div style="left:39px;top:261px;width:1px;height:1px;background:#808080"></div>
<div style="left:25px;top:229px;width:1px;height:1px;background:#808080"></div>
<div style="left:27px;top:229px;width:1px;height:1px;background:#808080"></div>
<div style="left:29px;top:229px;width:1px;height:1px;background:#808080"></div>
<div style="left:16px;top:225px;width:9px;height:9px;background:#fff;border:1px solid #808080;box-sizing:border-box"></div>
<div style="left:18px;top:229px;width:5px;height:1px;background:#000"></div>
<div style="left:40px;top:245px;width:1px;height:1px;background:#808080"></div>
<div style="left:42px;top:245px;width:1px;height:1px;background:#808080"></div>
<div style="left:44px;top:245px;width:1px;height:1px;background:#808080"></div>
<div style="left:46px;top:245px;width:1px;height:1px;background:#808080"></div>
<div style="left:48px;top:245px;width:1px;height:1px;background:#808080"></div>
<div style="left:50px;top:245px;width:1px;height:1px;background:#808080"></div>
<div style="left:40px;top:261px;width:1px;height:1px;background:#808080"></div>
<div style="left:42px;top:261px;width:1px;height:1px;background:#808080"></div>
<div style="left:44px;top:261px;width:1px;height:1px;background:#808080"></div>
<div style="left:46px;top:261px;width:1px;height:1px;background:#808080"></div>
<div style="left:48px;top:261px;width:1px;height:1px;background:#808080"></div>
<div style="left:50px;top:261px;width:1px;height:1px;background:#808080"></div>
<div style="left:69px;top:157px;width:44px;height:16px;background:#d4d0c8"></div>
<div class="t" style="left:32px;top:110px;font-size:11px;line-height:14px;letter-spacing:-0.3px">Pessoas</div>
<div class="t" style="left:51px;top:126px;font-size:11px;line-height:14px;letter-spacing:0px">Clientes</div>
<div class="t" style="left:70px;top:142px;font-size:11px;line-height:14px;letter-spacing:-0.5px">Física</div>
<div class="t" style="left:71px;top:158px;font-size:11px;line-height:14px;letter-spacing:-0.3px">Jurídica</div>
<div class="t" style="left:51px;top:174px;font-size:11px;line-height:14px;letter-spacing:0px">Fornecedores</div>
<div class="t" style="left:70px;top:190px;font-size:11px;line-height:14px;letter-spacing:-0.5px">Física</div>
<div class="t" style="left:71px;top:206px;font-size:11px;line-height:14px;letter-spacing:-0.3px">Jurídica</div>
<div class="t" style="left:51px;top:222px;font-size:11px;line-height:14px;letter-spacing:0.07px">Transportadores</div>
<div class="t" style="left:70px;top:238px;font-size:11px;line-height:14px;letter-spacing:-0.5px">Física</div>
<div class="t" style="left:71px;top:254px;font-size:11px;line-height:14px;letter-spacing:-0.3px">Jurídica</div>
<svg style="position:absolute;left:12px;top:109px" width="15" height="16" shape-rendering="crispEdges"><rect x="6" y="0" width="2" height="1" fill="#000"/><rect x="9" y="0" width="2" height="1" fill="#000"/><rect x="13" y="0" width="1" height="1" fill="#000"/><rect x="4" y="1" width="1" height="1" fill="#000"/><rect x="8" y="1" width="5" height="1" fill="#c0c0c0"/><rect x="14" y="1" width="1" height="1" fill="#000"/><rect x="4" y="2" width="2" height="1" fill="#000"/><rect x="6" y="2" width="2" height="1" fill="#fff"/><rect x="8" y="2" width="5" height="1" fill="#c0c0c0"/><rect x="2" y="3" width="6" height="1" fill="#000"/><rect x="8" y="3" width="5" height="1" fill="#c0c0c0"/><rect x="13" y="3" width="1" height="1" fill="#000"/><rect x="1" y="4" width="1" height="1" fill="#000"/><rect x="2" y="4" width="6" height="1" fill="#fff"/><rect x="8" y="4" width="1" height="1" fill="#000"/><rect x="9" y="4" width="4" height="1" fill="#c0c0c0"/><rect x="0" y="5" width="1" height="1" fill="#000"/><rect x="1" y="5" width="3" height="1" fill="#fff"/><rect x="4" y="5" width="2" height="1" fill="#c0c0c0"/><rect x="6" y="5" width="2" height="1" fill="#fff"/><rect x="8" y="5" width="1" height="1" fill="#000"/><rect x="9" y="5" width="5" height="1" fill="#c0c0c0"/><rect x="0" y="6" width="1" height="1" fill="#000"/><rect x="1" y="6" width="2" height="1" fill="#fff"/><rect x="3" y="6" width="1" height="1" fill="#c0c0c0"/><rect x="4" y="6" width="1" height="1" fill="#000"/><rect x="5" y="6" width="3" height="1" fill="#fff"/><rect x="8" y="6" width="1" height="1" fill="#000"/><rect x="9" y="6" width="4" height="1" fill="#c0c0c0"/><rect x="13" y="6" width="1" height="1" fill="#000"/><rect x="0" y="7" width="1" height="1" fill="#000"/><rect x="1" y="7" width="2" height="1" fill="#fff"/><rect x="3" y="7" width="2" height="1" fill="#c0c0c0"/><rect x="5" y="7" width="4" height="1" fill="#fff"/><rect x="9" y="7" width="4" height="1" fill="#c0c0c0"/><rect x="13" y="7" width="1" height="1" fill="#000"/><rect x="0" y="8" width="1" height="1" fill="#000"/><rect x="1" y="8" width="3" height="1" fill="#fff"/><rect x="4" y="8" width="1" height="1" fill="#c0c0c0"/><rect x="5" y="8" width="5" height="1" fill="#fff"/><rect x="10" y="8" width="2" height="1" fill="#000"/><rect x="0" y="9" width="2" height="1" fill="#000"/><rect x="2" y="9" width="2" height="1" fill="#c0c0c0"/><rect x="4" y="9" width="5" height="1" fill="#fff"/><rect x="9" y="9" width="1" height="1" fill="#000"/><rect x="10" y="9" width="2" height="1" fill="#fff"/><rect x="12" y="9" width="1" height="1" fill="#800080"/><rect x="13" y="9" width="1" height="1" fill="#000"/><rect x="1" y="10" width="2" height="1" fill="#000"/><rect x="3" y="10" width="2" height="1" fill="#c0c0c0"/><rect x="5" y="10" width="4" height="1" fill="#fff"/><rect x="9" y="10" width="1" height="1" fill="#000"/><rect x="10" y="10" width="1" height="1" fill="#fff"/><rect x="11" y="10" width="2" height="1" fill="#800080"/><rect x="13" y="10" width="1" height="1" fill="#000"/><rect x="2" y="11" width="2" height="1" fill="#000"/><rect x="4" y="11" width="4" height="1" fill="#fff"/><rect x="8" y="11" width="2" height="1" fill="#000"/><rect x="11" y="11" width="2" height="1" fill="#000"/><rect x="3" y="12" width="2" height="1" fill="#000"/><rect x="5" y="12" width="1" height="1" fill="#008080"/><rect x="6" y="12" width="2" height="1" fill="#fff"/><rect x="8" y="12" width="1" height="1" fill="#000"/><rect x="0" y="13" width="2" height="1" fill="#000"/><rect x="2" y="13" width="4" height="1" fill="#008080"/><rect x="6" y="13" width="1" height="1" fill="#000"/><rect x="7" y="13" width="5" height="1" fill="#008080"/><rect x="12" y="13" width="1" height="1" fill="#000"/><rect x="0" y="14" width="1" height="1" fill="#000"/><rect x="1" y="14" width="11" height="1" fill="#008080"/><rect x="12" y="14" width="1" height="1" fill="#000"/><rect x="0" y="15" width="13" height="1" fill="#000"/></svg>
<svg style="position:absolute;left:31px;top:126px" width="16" height="15" shape-rendering="crispEdges"><rect x="8" y="0" width="7" height="1" fill="#000"/><rect x="7" y="1" width="8" height="1" fill="#000"/><rect x="6" y="2" width="6" height="1" fill="#000"/><rect x="12" y="2" width="2" height="1" fill="#fff"/><rect x="14" y="2" width="1" height="1" fill="#000"/><rect x="3" y="3" width="8" height="1" fill="#000"/><rect x="11" y="3" width="1" height="1" fill="#fff"/><rect x="12" y="3" width="1" height="1" fill="#0000ff"/><rect x="13" y="3" width="1" height="1" fill="#fff"/><rect x="14" y="3" width="1" height="1" fill="#000"/><rect x="2" y="4" width="8" height="1" fill="#000"/><rect x="10" y="4" width="3" height="1" fill="#fff"/><rect x="13" y="4" width="1" height="1" fill="#000"/><rect x="1" y="5" width="6" height="1" fill="#000"/><rect x="7" y="5" width="1" height="1" fill="#fff"/><rect x="8" y="5" width="2" height="1" fill="#000"/><rect x="10" y="5" width="3" height="1" fill="#fff"/><rect x="13" y="5" width="1" height="1" fill="#000"/><rect x="0" y="6" width="6" height="1" fill="#000"/><rect x="6" y="6" width="1" height="1" fill="#fff"/><rect x="7" y="6" width="1" height="1" fill="#0000ff"/><rect x="8" y="6" width="1" height="1" fill="#000"/><rect x="9" y="6" width="2" height="1" fill="#fff"/><rect x="11" y="6" width="2" height="1" fill="#000"/><rect x="0" y="7" width="4" height="1" fill="#000"/><rect x="4" y="7" width="4" height="1" fill="#fff"/><rect x="8" y="7" width="1" height="1" fill="#000"/><rect x="9" y="7" width="2" height="1" fill="#fff"/><rect x="11" y="7" width="1" height="1" fill="#000"/><rect x="0" y="8" width="4" height="1" fill="#000"/><rect x="4" y="8" width="3" height="1" fill="#fff"/><rect x="7" y="8" width="1" height="1" fill="#000"/><rect x="8" y="8" width="4" height="1" fill="#ff0000"/><rect x="1" y="9" width="3" height="1" fill="#000"/><rect x="4" y="9" width="3" height="1" fill="#fff"/><rect x="7" y="9" width="1" height="1" fill="#000"/><rect x="8" y="9" width="4" height="1" fill="#ff0000"/><rect x="2" y="10" width="2" height="1" fill="#000"/><rect x="4" y="10" width="2" height="1" fill="#fff"/><rect x="6" y="10" width="2" height="1" fill="#000"/><rect x="8" y="10" width="3" height="1" fill="#ff0000"/><rect x="11" y="10" width="1" height="1" fill="#000"/><rect x="2" y="11" width="2" height="1" fill="#000"/><rect x="4" y="11" width="2" height="1" fill="#fff"/><rect x="6" y="11" width="1" height="1" fill="#000"/><rect x="3" y="12" width="3" height="1" fill="#fff"/><rect x="6" y="12" width="2" height="1" fill="#000"/><rect x="0" y="13" width="3" height="1" fill="#000"/><rect x="3" y="13" width="4" height="1" fill="#0000ff"/><rect x="7" y="13" width="1" height="1" fill="#000"/><rect x="0" y="14" width="8" height="1" fill="#000"/></svg>
<svg style="position:absolute;left:52px;top:141px" width="14" height="15" shape-rendering="crispEdges"><rect x="3" y="0" width="9" height="1" fill="#000"/><rect x="1" y="1" width="11" height="1" fill="#000"/><rect x="0" y="2" width="12" height="1" fill="#000"/><rect x="0" y="3" width="8" height="1" fill="#000"/><rect x="8" y="3" width="1" height="1" fill="#fff"/><rect x="9" y="3" width="3" height="1" fill="#000"/><rect x="0" y="4" width="4" height="1" fill="#000"/><rect x="4" y="4" width="1" height="1" fill="#808000"/><rect x="5" y="4" width="5" height="1" fill="#fff"/><rect x="10" y="4" width="2" height="1" fill="#000"/><rect x="0" y="5" width="3" height="1" fill="#000"/><rect x="3" y="5" width="2" height="1" fill="#808000"/><rect x="5" y="5" width="3" height="1" fill="#fff"/><rect x="8" y="5" width="1" height="1" fill="#e0e0e0"/><rect x="9" y="5" width="1" height="1" fill="#000"/><rect x="10" y="5" width="1" height="1" fill="#fff"/><rect x="11" y="5" width="1" height="1" fill="#808000"/><rect x="0" y="6" width="3" height="1" fill="#000"/><rect x="3" y="6" width="1" height="1" fill="#808000"/><rect x="4" y="6" width="6" height="1" fill="#fff"/><rect x="11" y="6" width="1" height="1" fill="#000"/><rect x="0" y="7" width="4" height="1" fill="#000"/><rect x="4" y="7" width="1" height="1" fill="#808000"/><rect x="5" y="7" width="4" height="1" fill="#fff"/><rect x="9" y="7" width="1" height="1" fill="#808000"/><rect x="11" y="7" width="1" height="1" fill="#000"/><rect x="1" y="8" width="3" height="1" fill="#000"/><rect x="4" y="8" width="6" height="1" fill="#fff"/><rect x="10" y="8" width="1" height="1" fill="#808000"/><rect x="2" y="9" width="3" height="1" fill="#000"/><rect x="5" y="9" width="4" height="1" fill="#fff"/><rect x="10" y="9" width="1" height="1" fill="#808000"/><rect x="4" y="10" width="2" height="1" fill="#000"/><rect x="6" y="10" width="4" height="1" fill="#fff"/><rect x="10" y="10" width="1" height="1" fill="#000"/><rect x="4" y="11" width="2" height="1" fill="#000"/><rect x="6" y="11" width="3" height="1" fill="#fff"/><rect x="9" y="11" width="2" height="1" fill="#000"/><rect x="3" y="12" width="1" height="1" fill="#0000ff"/><rect x="4" y="12" width="2" height="1" fill="#00ffff"/><rect x="6" y="12" width="1" height="1" fill="#0000ff"/><rect x="7" y="12" width="1" height="1" fill="#fff"/><rect x="8" y="12" width="1" height="1" fill="#0000ff"/><rect x="9" y="12" width="1" height="1" fill="#fff"/><rect x="10" y="12" width="1" height="1" fill="#0000ff"/><rect x="3" y="13" width="1" height="1" fill="#0000ff"/><rect x="4" y="13" width="2" height="1" fill="#00ffff"/><rect x="6" y="13" width="5" height="1" fill="#0000ff"/><rect x="0" y="14" width="13" height="1" fill="#000"/></svg>
<svg style="position:absolute;left:50px;top:158px" width="17" height="15" shape-rendering="crispEdges"><rect x="1" y="0" width="1" height="1" fill="#000"/><rect x="3" y="0" width="2" height="1" fill="#000"/><rect x="6" y="0" width="3" height="1" fill="#808000"/><rect x="10" y="0" width="3" height="1" fill="#808000"/><rect x="14" y="0" width="1" height="1" fill="#808000"/><rect x="4" y="1" width="1" height="1" fill="#000"/><rect x="7" y="1" width="1" height="1" fill="#808000"/><rect x="9" y="1" width="1" height="1" fill="#808000"/><rect x="11" y="1" width="2" height="1" fill="#808000"/><rect x="14" y="1" width="1" height="1" fill="#808000"/><rect x="8" y="2" width="1" height="1" fill="#808000"/><rect x="11" y="2" width="5" height="1" fill="#000"/><rect x="11" y="3" width="5" height="1" fill="#000"/><rect x="0" y="4" width="1" height="1" fill="#000"/><rect x="4" y="4" width="1" height="1" fill="#000"/><rect x="9" y="4" width="1" height="1" fill="#000"/><rect x="14" y="4" width="2" height="1" fill="#000"/><rect x="0" y="5" width="2" height="1" fill="#000"/><rect x="4" y="5" width="2" height="1" fill="#000"/><rect x="9" y="5" width="2" height="1" fill="#000"/><rect x="14" y="5" width="2" height="1" fill="#000"/><rect x="0" y="6" width="1" height="1" fill="#000"/><rect x="1" y="6" width="1" height="1" fill="#c0c0c0"/><rect x="2" y="6" width="1" height="1" fill="#000"/><rect x="4" y="6" width="1" height="1" fill="#000"/><rect x="5" y="6" width="1" height="1" fill="#c0c0c0"/><rect x="6" y="6" width="1" height="1" fill="#000"/><rect x="9" y="6" width="1" height="1" fill="#000"/><rect x="10" y="6" width="1" height="1" fill="#c0c0c0"/><rect x="11" y="6" width="1" height="1" fill="#000"/><rect x="14" y="6" width="2" height="1" fill="#000"/><rect x="0" y="7" width="1" height="1" fill="#000"/><rect x="1" y="7" width="2" height="1" fill="#c0c0c0"/><rect x="3" y="7" width="2" height="1" fill="#000"/><rect x="5" y="7" width="2" height="1" fill="#c0c0c0"/><rect x="7" y="7" width="1" height="1" fill="#000"/><rect x="9" y="7" width="1" height="1" fill="#000"/><rect x="10" y="7" width="2" height="1" fill="#c0c0c0"/><rect x="12" y="7" width="1" height="1" fill="#000"/><rect x="14" y="7" width="2" height="1" fill="#000"/><rect x="0" y="8" width="1" height="1" fill="#000"/><rect x="1" y="8" width="7" height="1" fill="#c0c0c0"/><rect x="8" y="8" width="2" height="1" fill="#000"/><rect x="10" y="8" width="3" height="1" fill="#c0c0c0"/><rect x="13" y="8" width="3" height="1" fill="#000"/><rect x="0" y="9" width="1" height="1" fill="#000"/><rect x="1" y="9" width="13" height="1" fill="#c0c0c0"/><rect x="14" y="9" width="2" height="1" fill="#000"/><rect x="0" y="10" width="1" height="1" fill="#000"/><rect x="1" y="10" width="13" height="1" fill="#c0c0c0"/><rect x="14" y="10" width="2" height="1" fill="#000"/><rect x="0" y="11" width="1" height="1" fill="#000"/><rect x="1" y="11" width="13" height="1" fill="#c0c0c0"/><rect x="14" y="11" width="2" height="1" fill="#000"/><rect x="0" y="12" width="1" height="1" fill="#000"/><rect x="1" y="12" width="13" height="1" fill="#c0c0c0"/><rect x="14" y="12" width="2" height="1" fill="#000"/><rect x="0" y="13" width="1" height="1" fill="#000"/><rect x="1" y="13" width="1" height="1" fill="#fff"/><rect x="2" y="13" width="12" height="1" fill="#c0c0c0"/><rect x="14" y="13" width="2" height="1" fill="#000"/><rect x="1" y="14" width="15" height="1" fill="#000"/></svg>
<svg style="position:absolute;left:30px;top:173px" width="17" height="15" shape-rendering="crispEdges"><rect x="2" y="1" width="2" height="1" fill="#ffff00"/><rect x="9" y="1" width="2" height="1" fill="#000"/><rect x="1" y="2" width="2" height="1" fill="#000"/><rect x="3" y="2" width="1" height="1" fill="#ff8040"/><rect x="4" y="2" width="1" height="1" fill="#000"/><rect x="9" y="2" width="1" height="1" fill="#000"/><rect x="10" y="2" width="1" height="1" fill="#ff8040"/><rect x="11" y="2" width="1" height="1" fill="#000"/><rect x="1" y="3" width="1" height="1" fill="#000"/><rect x="2" y="3" width="1" height="1" fill="#ff8040"/><rect x="3" y="3" width="1" height="1" fill="#ffff00"/><rect x="4" y="3" width="2" height="1" fill="#000"/><rect x="7" y="3" width="3" height="1" fill="#0000ff"/><rect x="10" y="3" width="1" height="1" fill="#000"/><rect x="11" y="3" width="1" height="1" fill="#ff8040"/><rect x="12" y="3" width="1" height="1" fill="#000"/><rect x="1" y="4" width="1" height="1" fill="#ff8040"/><rect x="2" y="4" width="1" height="1" fill="#000"/><rect x="3" y="4" width="1" height="1" fill="#ff8040"/><rect x="4" y="4" width="1" height="1" fill="#ffff00"/><rect x="5" y="4" width="1" height="1" fill="#000"/><rect x="6" y="4" width="5" height="1" fill="#0000ff"/><rect x="11" y="4" width="1" height="1" fill="#ffff00"/><rect x="12" y="4" width="1" height="1" fill="#ff8040"/><rect x="13" y="4" width="1" height="1" fill="#000"/><rect x="1" y="5" width="1" height="1" fill="#000"/><rect x="2" y="5" width="1" height="1" fill="#ff8040"/><rect x="3" y="5" width="1" height="1" fill="#000"/><rect x="4" y="5" width="1" height="1" fill="#ff8040"/><rect x="5" y="5" width="1" height="1" fill="#ffff00"/><rect x="6" y="5" width="1" height="1" fill="#0000ff"/><rect x="7" y="5" width="3" height="1" fill="#fff"/><rect x="10" y="5" width="1" height="1" fill="#0000ff"/><rect x="11" y="5" width="1" height="1" fill="#ffff00"/><rect x="12" y="5" width="2" height="1" fill="#ff8040"/><rect x="14" y="5" width="1" height="1" fill="#000"/><rect x="1" y="6" width="1" height="1" fill="#ffff00"/><rect x="2" y="6" width="1" height="1" fill="#000"/><rect x="3" y="6" width="1" height="1" fill="#ff8040"/><rect x="4" y="6" width="1" height="1" fill="#000"/><rect x="5" y="6" width="1" height="1" fill="#ff8040"/><rect x="6" y="6" width="2" height="1" fill="#0000ff"/><rect x="8" y="6" width="1" height="1" fill="#fff"/><rect x="9" y="6" width="2" height="1" fill="#0000ff"/><rect x="11" y="6" width="1" height="1" fill="#ffff00"/><rect x="12" y="6" width="3" height="1" fill="#ff8040"/><rect x="15" y="6" width="1" height="1" fill="#000"/><rect x="1" y="7" width="1" height="1" fill="#000"/><rect x="2" y="7" width="1" height="1" fill="#ffff00"/><rect x="3" y="7" width="1" height="1" fill="#000"/><rect x="4" y="7" width="1" height="1" fill="#ff8040"/><rect x="5" y="7" width="1" height="1" fill="#000"/><rect x="6" y="7" width="2" height="1" fill="#0000ff"/><rect x="8" y="7" width="1" height="1" fill="#fff"/><rect x="9" y="7" width="2" height="1" fill="#0000ff"/><rect x="11" y="7" width="1" height="1" fill="#ffff00"/><rect x="12" y="7" width="4" height="1" fill="#ff8040"/><rect x="16" y="7" width="1" height="1" fill="#000"/><rect x="1" y="8" width="1" height="1" fill="#ff8040"/><rect x="2" y="8" width="1" height="1" fill="#000"/><rect x="3" y="8" width="1" height="1" fill="#ffff00"/><rect x="4" y="8" width="1" height="1" fill="#000"/><rect x="5" y="8" width="1" height="1" fill="#ff8040"/><rect x="6" y="8" width="2" height="1" fill="#0000ff"/><rect x="8" y="8" width="1" height="1" fill="#fff"/><rect x="9" y="8" width="2" height="1" fill="#0000ff"/><rect x="11" y="8" width="1" height="1" fill="#ffff00"/><rect x="12" y="8" width="1" height="1" fill="#ff8040"/><rect x="13" y="8" width="2" height="1" fill="#000"/><rect x="15" y="8" width="1" height="1" fill="#ff8040"/><rect x="16" y="8" width="1" height="1" fill="#000"/><rect x="1" y="9" width="1" height="1" fill="#000"/><rect x="2" y="9" width="1" height="1" fill="#ff8040"/><rect x="3" y="9" width="1" height="1" fill="#000"/><rect x="4" y="9" width="1" height="1" fill="#ffff00"/><rect x="5" y="9" width="1" height="1" fill="#000"/><rect x="6" y="9" width="2" height="1" fill="#0000ff"/><rect x="8" y="9" width="1" height="1" fill="#fff"/><rect x="9" y="9" width="2" height="1" fill="#00ffff"/><rect x="11" y="9" width="1" height="1" fill="#ffff00"/><rect x="12" y="9" width="4" height="1" fill="#ff8040"/><rect x="16" y="9" width="1" height="1" fill="#000"/><rect x="2" y="10" width="1" height="1" fill="#000"/><rect x="3" y="10" width="1" height="1" fill="#ff8040"/><rect x="4" y="10" width="1" height="1" fill="#000"/><rect x="5" y="10" width="1" height="1" fill="#ffff00"/><rect x="6" y="10" width="5" height="1" fill="#0000ff"/><rect x="11" y="10" width="1" height="1" fill="#ffff00"/><rect x="12" y="10" width="5" height="1" fill="#ff8040"/><rect x="3" y="11" width="1" height="1" fill="#000"/><rect x="4" y="11" width="1" height="1" fill="#ff8040"/><rect x="5" y="11" width="1" height="1" fill="#000"/><rect x="6" y="11" width="1" height="1" fill="#ffff00"/><rect x="7" y="11" width="10" height="1" fill="#ff8040"/><rect x="4" y="12" width="1" height="1" fill="#000"/><rect x="5" y="12" width="12" height="1" fill="#ffff00"/><rect x="5" y="13" width="12" height="1" fill="#000"/><rect x="5" y="14" width="12" height="1" fill="#a04000"/></svg>
<svg style="position:absolute;left:52px;top:189px" width="14" height="15" shape-rendering="crispEdges"><rect x="3" y="0" width="9" height="1" fill="#000"/><rect x="1" y="1" width="11" height="1" fill="#000"/><rect x="0" y="2" width="12" height="1" fill="#000"/><rect x="0" y="3" width="8" height="1" fill="#000"/><rect x="8" y="3" width="1" height="1" fill="#fff"/><rect x="9" y="3" width="3" height="1" fill="#000"/><rect x="0" y="4" width="4" height="1" fill="#000"/><rect x="4" y="4" width="1" height="1" fill="#808000"/><rect x="5" y="4" width="5" height="1" fill="#fff"/><rect x="10" y="4" width="2" height="1" fill="#000"/><rect x="0" y="5" width="3" height="1" fill="#000"/><rect x="3" y="5" width="2" height="1" fill="#808000"/><rect x="5" y="5" width="3" height="1" fill="#fff"/><rect x="8" y="5" width="1" height="1" fill="#e0e0e0"/><rect x="9" y="5" width="1" height="1" fill="#000"/><rect x="10" y="5" width="1" height="1" fill="#fff"/><rect x="11" y="5" width="1" height="1" fill="#808000"/><rect x="0" y="6" width="3" height="1" fill="#000"/><rect x="3" y="6" width="1" height="1" fill="#808000"/><rect x="4" y="6" width="6" height="1" fill="#fff"/><rect x="11" y="6" width="1" height="1" fill="#000"/><rect x="0" y="7" width="4" height="1" fill="#000"/><rect x="4" y="7" width="1" height="1" fill="#808000"/><rect x="5" y="7" width="4" height="1" fill="#fff"/><rect x="9" y="7" width="1" height="1" fill="#808000"/><rect x="11" y="7" width="1" height="1" fill="#000"/><rect x="1" y="8" width="3" height="1" fill="#000"/><rect x="4" y="8" width="6" height="1" fill="#fff"/><rect x="10" y="8" width="1" height="1" fill="#808000"/><rect x="2" y="9" width="3" height="1" fill="#000"/><rect x="5" y="9" width="4" height="1" fill="#fff"/><rect x="10" y="9" width="1" height="1" fill="#808000"/><rect x="4" y="10" width="2" height="1" fill="#000"/><rect x="6" y="10" width="4" height="1" fill="#fff"/><rect x="10" y="10" width="1" height="1" fill="#000"/><rect x="4" y="11" width="2" height="1" fill="#000"/><rect x="6" y="11" width="3" height="1" fill="#fff"/><rect x="9" y="11" width="2" height="1" fill="#000"/><rect x="3" y="12" width="1" height="1" fill="#0000ff"/><rect x="4" y="12" width="2" height="1" fill="#00ffff"/><rect x="6" y="12" width="1" height="1" fill="#0000ff"/><rect x="7" y="12" width="1" height="1" fill="#fff"/><rect x="8" y="12" width="1" height="1" fill="#0000ff"/><rect x="9" y="12" width="1" height="1" fill="#fff"/><rect x="10" y="12" width="1" height="1" fill="#0000ff"/><rect x="3" y="13" width="1" height="1" fill="#0000ff"/><rect x="4" y="13" width="2" height="1" fill="#00ffff"/><rect x="6" y="13" width="5" height="1" fill="#0000ff"/><rect x="0" y="14" width="13" height="1" fill="#000"/></svg>
<svg style="position:absolute;left:50px;top:206px" width="17" height="15" shape-rendering="crispEdges"><rect x="1" y="0" width="1" height="1" fill="#000"/><rect x="3" y="0" width="2" height="1" fill="#000"/><rect x="6" y="0" width="3" height="1" fill="#808000"/><rect x="10" y="0" width="3" height="1" fill="#808000"/><rect x="14" y="0" width="1" height="1" fill="#808000"/><rect x="4" y="1" width="1" height="1" fill="#000"/><rect x="7" y="1" width="1" height="1" fill="#808000"/><rect x="9" y="1" width="1" height="1" fill="#808000"/><rect x="11" y="1" width="2" height="1" fill="#808000"/><rect x="14" y="1" width="1" height="1" fill="#808000"/><rect x="8" y="2" width="1" height="1" fill="#808000"/><rect x="11" y="2" width="5" height="1" fill="#000"/><rect x="11" y="3" width="5" height="1" fill="#000"/><rect x="0" y="4" width="1" height="1" fill="#000"/><rect x="4" y="4" width="1" height="1" fill="#000"/><rect x="9" y="4" width="1" height="1" fill="#000"/><rect x="14" y="4" width="2" height="1" fill="#000"/><rect x="0" y="5" width="2" height="1" fill="#000"/><rect x="4" y="5" width="2" height="1" fill="#000"/><rect x="9" y="5" width="2" height="1" fill="#000"/><rect x="14" y="5" width="2" height="1" fill="#000"/><rect x="0" y="6" width="1" height="1" fill="#000"/><rect x="1" y="6" width="1" height="1" fill="#c0c0c0"/><rect x="2" y="6" width="1" height="1" fill="#000"/><rect x="4" y="6" width="1" height="1" fill="#000"/><rect x="5" y="6" width="1" height="1" fill="#c0c0c0"/><rect x="6" y="6" width="1" height="1" fill="#000"/><rect x="9" y="6" width="1" height="1" fill="#000"/><rect x="10" y="6" width="1" height="1" fill="#c0c0c0"/><rect x="11" y="6" width="1" height="1" fill="#000"/><rect x="14" y="6" width="2" height="1" fill="#000"/><rect x="0" y="7" width="1" height="1" fill="#000"/><rect x="1" y="7" width="2" height="1" fill="#c0c0c0"/><rect x="3" y="7" width="2" height="1" fill="#000"/><rect x="5" y="7" width="2" height="1" fill="#c0c0c0"/><rect x="7" y="7" width="1" height="1" fill="#000"/><rect x="9" y="7" width="1" height="1" fill="#000"/><rect x="10" y="7" width="2" height="1" fill="#c0c0c0"/><rect x="12" y="7" width="1" height="1" fill="#000"/><rect x="14" y="7" width="2" height="1" fill="#000"/><rect x="0" y="8" width="1" height="1" fill="#000"/><rect x="1" y="8" width="7" height="1" fill="#c0c0c0"/><rect x="8" y="8" width="2" height="1" fill="#000"/><rect x="10" y="8" width="3" height="1" fill="#c0c0c0"/><rect x="13" y="8" width="3" height="1" fill="#000"/><rect x="0" y="9" width="1" height="1" fill="#000"/><rect x="1" y="9" width="13" height="1" fill="#c0c0c0"/><rect x="14" y="9" width="2" height="1" fill="#000"/><rect x="0" y="10" width="1" height="1" fill="#000"/><rect x="1" y="10" width="13" height="1" fill="#c0c0c0"/><rect x="14" y="10" width="2" height="1" fill="#000"/><rect x="0" y="11" width="1" height="1" fill="#000"/><rect x="1" y="11" width="13" height="1" fill="#c0c0c0"/><rect x="14" y="11" width="2" height="1" fill="#000"/><rect x="0" y="12" width="1" height="1" fill="#000"/><rect x="1" y="12" width="13" height="1" fill="#c0c0c0"/><rect x="14" y="12" width="2" height="1" fill="#000"/><rect x="0" y="13" width="1" height="1" fill="#000"/><rect x="1" y="13" width="1" height="1" fill="#fff"/><rect x="2" y="13" width="12" height="1" fill="#c0c0c0"/><rect x="14" y="13" width="2" height="1" fill="#000"/><rect x="1" y="14" width="15" height="1" fill="#000"/></svg>
<svg style="position:absolute;left:31px;top:224px" width="16" height="10" shape-rendering="crispEdges"><rect x="0" y="0" width="11" height="1" fill="#a04000"/><rect x="12" y="0" width="4" height="1" fill="#0000ff"/><rect x="0" y="1" width="11" height="1" fill="#a04000"/><rect x="12" y="1" width="1" height="1" fill="#0000ff"/><rect x="13" y="1" width="1" height="1" fill="#00ffff"/><rect x="14" y="1" width="2" height="1" fill="#0000ff"/><rect x="0" y="2" width="11" height="1" fill="#a04000"/><rect x="12" y="2" width="1" height="1" fill="#0000ff"/><rect x="13" y="2" width="1" height="1" fill="#00ffff"/><rect x="14" y="2" width="2" height="1" fill="#0000ff"/><rect x="0" y="3" width="11" height="1" fill="#a04000"/><rect x="12" y="3" width="1" height="1" fill="#0000ff"/><rect x="13" y="3" width="1" height="1" fill="#00ffff"/><rect x="14" y="3" width="2" height="1" fill="#0000ff"/><rect x="0" y="4" width="11" height="1" fill="#0000ff"/><rect x="11" y="4" width="1" height="1" fill="#000"/><rect x="12" y="4" width="4" height="1" fill="#0000ff"/><rect x="0" y="5" width="12" height="1" fill="#0000ff"/><rect x="12" y="5" width="1" height="1" fill="#000"/><rect x="13" y="5" width="3" height="1" fill="#0000ff"/><rect x="1" y="6" width="4" height="1" fill="#000"/><rect x="5" y="6" width="1" height="1" fill="#808000"/><rect x="6" y="6" width="1" height="1" fill="#000"/><rect x="7" y="6" width="1" height="1" fill="#808000"/><rect x="8" y="6" width="2" height="1" fill="#000"/><rect x="10" y="6" width="3" height="1" fill="#808000"/><rect x="13" y="6" width="3" height="1" fill="#000"/><rect x="1" y="7" width="4" height="1" fill="#000"/><rect x="5" y="7" width="1" height="1" fill="#808000"/><rect x="6" y="7" width="1" height="1" fill="#000"/><rect x="7" y="7" width="1" height="1" fill="#808000"/><rect x="8" y="7" width="2" height="1" fill="#000"/><rect x="10" y="7" width="3" height="1" fill="#808000"/><rect x="13" y="7" width="3" height="1" fill="#000"/><rect x="1" y="8" width="1" height="1" fill="#808080"/><rect x="4" y="8" width="1" height="1" fill="#808080"/><rect x="9" y="8" width="1" height="1" fill="#808080"/><rect x="13" y="8" width="1" height="1" fill="#808080"/><rect x="1" y="9" width="1" height="1" fill="#808080"/><rect x="4" y="9" width="1" height="1" fill="#808080"/><rect x="9" y="9" width="1" height="1" fill="#808080"/><rect x="13" y="9" width="1" height="1" fill="#808080"/></svg>
<svg style="position:absolute;left:52px;top:237px" width="14" height="15" shape-rendering="crispEdges"><rect x="3" y="0" width="9" height="1" fill="#000"/><rect x="1" y="1" width="11" height="1" fill="#000"/><rect x="0" y="2" width="12" height="1" fill="#000"/><rect x="0" y="3" width="8" height="1" fill="#000"/><rect x="8" y="3" width="1" height="1" fill="#fff"/><rect x="9" y="3" width="3" height="1" fill="#000"/><rect x="0" y="4" width="4" height="1" fill="#000"/><rect x="4" y="4" width="1" height="1" fill="#808000"/><rect x="5" y="4" width="5" height="1" fill="#fff"/><rect x="10" y="4" width="2" height="1" fill="#000"/><rect x="0" y="5" width="3" height="1" fill="#000"/><rect x="3" y="5" width="2" height="1" fill="#808000"/><rect x="5" y="5" width="3" height="1" fill="#fff"/><rect x="8" y="5" width="1" height="1" fill="#e0e0e0"/><rect x="9" y="5" width="1" height="1" fill="#000"/><rect x="10" y="5" width="1" height="1" fill="#fff"/><rect x="11" y="5" width="1" height="1" fill="#808000"/><rect x="0" y="6" width="3" height="1" fill="#000"/><rect x="3" y="6" width="1" height="1" fill="#808000"/><rect x="4" y="6" width="6" height="1" fill="#fff"/><rect x="11" y="6" width="1" height="1" fill="#000"/><rect x="0" y="7" width="4" height="1" fill="#000"/><rect x="4" y="7" width="1" height="1" fill="#808000"/><rect x="5" y="7" width="4" height="1" fill="#fff"/><rect x="9" y="7" width="1" height="1" fill="#808000"/><rect x="11" y="7" width="1" height="1" fill="#000"/><rect x="1" y="8" width="3" height="1" fill="#000"/><rect x="4" y="8" width="6" height="1" fill="#fff"/><rect x="10" y="8" width="1" height="1" fill="#808000"/><rect x="2" y="9" width="3" height="1" fill="#000"/><rect x="5" y="9" width="4" height="1" fill="#fff"/><rect x="10" y="9" width="1" height="1" fill="#808000"/><rect x="4" y="10" width="2" height="1" fill="#000"/><rect x="6" y="10" width="4" height="1" fill="#fff"/><rect x="10" y="10" width="1" height="1" fill="#000"/><rect x="4" y="11" width="2" height="1" fill="#000"/><rect x="6" y="11" width="3" height="1" fill="#fff"/><rect x="9" y="11" width="2" height="1" fill="#000"/><rect x="3" y="12" width="1" height="1" fill="#0000ff"/><rect x="4" y="12" width="2" height="1" fill="#00ffff"/><rect x="6" y="12" width="1" height="1" fill="#0000ff"/><rect x="7" y="12" width="1" height="1" fill="#fff"/><rect x="8" y="12" width="1" height="1" fill="#0000ff"/><rect x="9" y="12" width="1" height="1" fill="#fff"/><rect x="10" y="12" width="1" height="1" fill="#0000ff"/><rect x="3" y="13" width="1" height="1" fill="#0000ff"/><rect x="4" y="13" width="2" height="1" fill="#00ffff"/><rect x="6" y="13" width="5" height="1" fill="#0000ff"/><rect x="0" y="14" width="13" height="1" fill="#000"/></svg>
<svg style="position:absolute;left:50px;top:254px" width="17" height="15" shape-rendering="crispEdges"><rect x="1" y="0" width="1" height="1" fill="#000"/><rect x="3" y="0" width="2" height="1" fill="#000"/><rect x="6" y="0" width="3" height="1" fill="#808000"/><rect x="10" y="0" width="3" height="1" fill="#808000"/><rect x="14" y="0" width="1" height="1" fill="#808000"/><rect x="4" y="1" width="1" height="1" fill="#000"/><rect x="7" y="1" width="1" height="1" fill="#808000"/><rect x="9" y="1" width="1" height="1" fill="#808000"/><rect x="11" y="1" width="2" height="1" fill="#808000"/><rect x="14" y="1" width="1" height="1" fill="#808000"/><rect x="8" y="2" width="1" height="1" fill="#808000"/><rect x="11" y="2" width="5" height="1" fill="#000"/><rect x="11" y="3" width="5" height="1" fill="#000"/><rect x="0" y="4" width="1" height="1" fill="#000"/><rect x="4" y="4" width="1" height="1" fill="#000"/><rect x="9" y="4" width="1" height="1" fill="#000"/><rect x="14" y="4" width="2" height="1" fill="#000"/><rect x="0" y="5" width="2" height="1" fill="#000"/><rect x="4" y="5" width="2" height="1" fill="#000"/><rect x="9" y="5" width="2" height="1" fill="#000"/><rect x="14" y="5" width="2" height="1" fill="#000"/><rect x="0" y="6" width="1" height="1" fill="#000"/><rect x="1" y="6" width="1" height="1" fill="#c0c0c0"/><rect x="2" y="6" width="1" height="1" fill="#000"/><rect x="4" y="6" width="1" height="1" fill="#000"/><rect x="5" y="6" width="1" height="1" fill="#c0c0c0"/><rect x="6" y="6" width="1" height="1" fill="#000"/><rect x="9" y="6" width="1" height="1" fill="#000"/><rect x="10" y="6" width="1" height="1" fill="#c0c0c0"/><rect x="11" y="6" width="1" height="1" fill="#000"/><rect x="14" y="6" width="2" height="1" fill="#000"/><rect x="0" y="7" width="1" height="1" fill="#000"/><rect x="1" y="7" width="2" height="1" fill="#c0c0c0"/><rect x="3" y="7" width="2" height="1" fill="#000"/><rect x="5" y="7" width="2" height="1" fill="#c0c0c0"/><rect x="7" y="7" width="1" height="1" fill="#000"/><rect x="9" y="7" width="1" height="1" fill="#000"/><rect x="10" y="7" width="2" height="1" fill="#c0c0c0"/><rect x="12" y="7" width="1" height="1" fill="#000"/><rect x="14" y="7" width="2" height="1" fill="#000"/><rect x="0" y="8" width="1" height="1" fill="#000"/><rect x="1" y="8" width="7" height="1" fill="#c0c0c0"/><rect x="8" y="8" width="2" height="1" fill="#000"/><rect x="10" y="8" width="3" height="1" fill="#c0c0c0"/><rect x="13" y="8" width="3" height="1" fill="#000"/><rect x="0" y="9" width="1" height="1" fill="#000"/><rect x="1" y="9" width="13" height="1" fill="#c0c0c0"/><rect x="14" y="9" width="2" height="1" fill="#000"/><rect x="0" y="10" width="1" height="1" fill="#000"/><rect x="1" y="10" width="13" height="1" fill="#c0c0c0"/><rect x="14" y="10" width="2" height="1" fill="#000"/><rect x="0" y="11" width="1" height="1" fill="#000"/><rect x="1" y="11" width="13" height="1" fill="#c0c0c0"/><rect x="14" y="11" width="2" height="1" fill="#000"/><rect x="0" y="12" width="1" height="1" fill="#000"/><rect x="1" y="12" width="13" height="1" fill="#c0c0c0"/><rect x="14" y="12" width="2" height="1" fill="#000"/><rect x="0" y="13" width="1" height="1" fill="#000"/><rect x="1" y="13" width="1" height="1" fill="#fff"/><rect x="2" y="13" width="12" height="1" fill="#c0c0c0"/><rect x="14" y="13" width="2" height="1" fill="#000"/><rect x="1" y="14" width="15" height="1" fill="#000"/></svg>
</body></html>
